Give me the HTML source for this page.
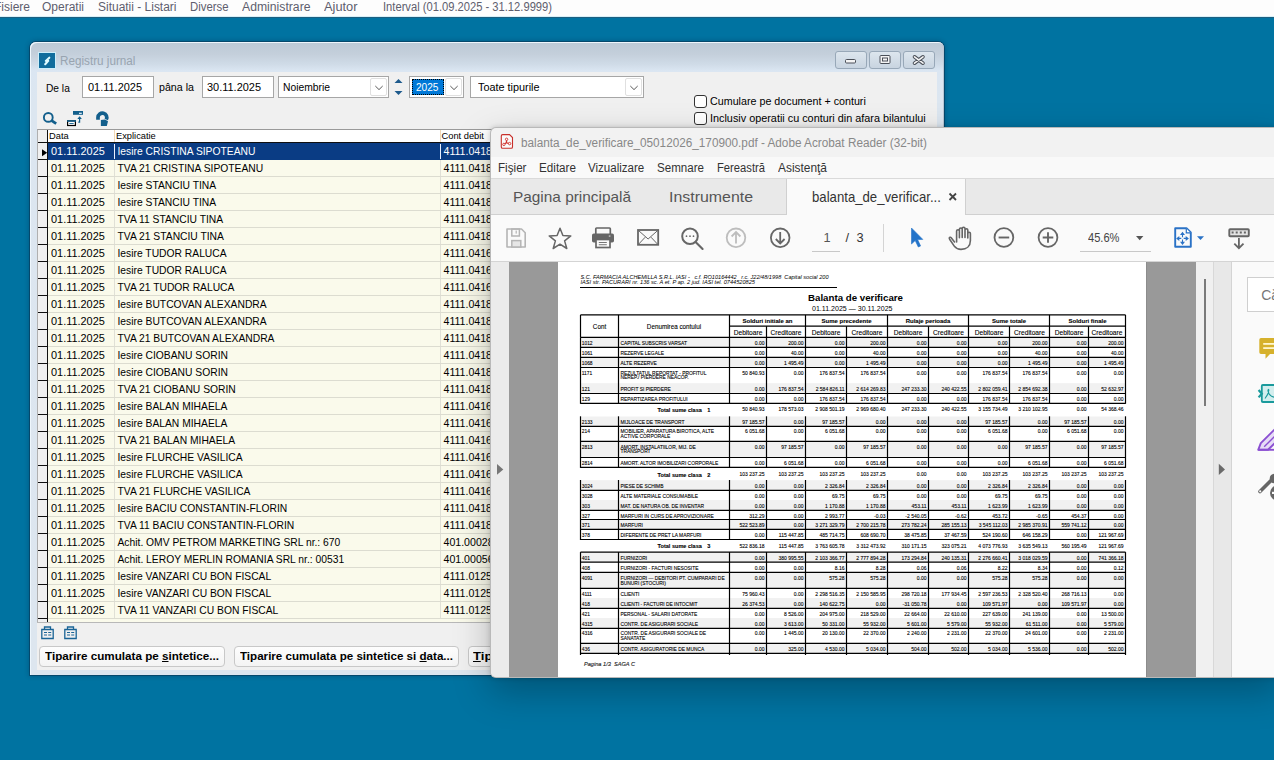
<!DOCTYPE html><html><head><meta charset="utf-8"><style>
html,body{margin:0;padding:0}
body{width:1274px;height:760px;overflow:hidden;position:relative;background:#0073a1;font-family:"Liberation Sans",sans-serif}
.a{position:absolute}
.t{white-space:nowrap}
</style></head><body><div class="a" style="left:0px;top:0px;width:1274px;height:17px;background:#fdfdfd;border-bottom:1px solid #d8f0f8;box-sizing:border-box"></div><div class="a" style="left:0px;top:17px;width:1274px;height:1px;background:#1c5f80"></div><div class="a t" style="left:-6.5px;top:-0.06px;font-size:12px;line-height:15px;color:#5e5e6e;font-weight:normal;transform:scaleX(0.9998);transform-origin:0 0;">Fisiere</div><div class="a t" style="left:42px;top:-0.06px;font-size:12px;line-height:15px;color:#5e5e6e;font-weight:normal;transform:scaleX(0.9996);transform-origin:0 0;">Operatii</div><div class="a t" style="left:97.5px;top:-0.06px;font-size:12px;line-height:15px;color:#5e5e6e;font-weight:normal;transform:scaleX(0.9975);transform-origin:0 0;">Situatii - Listari</div><div class="a t" style="left:189.8px;top:-0.06px;font-size:12px;line-height:15px;color:#5e5e6e;font-weight:normal;transform:scaleX(0.9465);transform-origin:0 0;">Diverse</div><div class="a t" style="left:241.8px;top:-0.06px;font-size:12px;line-height:15px;color:#5e5e6e;font-weight:normal;transform:scaleX(1.0170);transform-origin:0 0;">Administrare</div><div class="a t" style="left:324px;top:-0.06px;font-size:12px;line-height:15px;color:#5e5e6e;font-weight:normal;transform:scaleX(1.0686);transform-origin:0 0;">Ajutor</div><div class="a t" style="left:382.8px;top:-0.06px;font-size:12px;line-height:15px;color:#5e5e6e;font-weight:normal;transform:scaleX(0.9313);transform-origin:0 0;">Interval (01.09.2025 - 31.12.9999)</div><div class="a" style="left:30px;top:42px;width:914px;height:633px;background:linear-gradient(#bccad7 0,#c4cfdb 12px,#cfdbe7 22px,#dbe6f2 29px,#dce6f0 60px,#dde6ef);border-radius:6px 6px 0 0;box-shadow:inset 1px 1px 0 0 #eef6fc,inset -1px 0 0 0 #b8c6d4,0 0 0 1px rgba(10,50,80,0.55),0 0 5px 1px rgba(0,30,60,0.3)"></div><div class="a" style="left:38px;top:52px;width:18px;height:17px;background:#cdeefa"></div><div class="a" style="left:39px;top:53px;width:16px;height:15px;background:#116d9d"></div><svg class="a" style="left:0;top:0" width="60" height="70"><path d="M49.3 57.7 L45.8 60.9 L48.2 60.9 L45.2 64.2" stroke="#e0fbff" stroke-width="2.1" fill="none" stroke-linecap="round" stroke-linejoin="round"/></svg><div class="a t" style="left:59.5px;top:54.04px;font-size:12.3px;line-height:15px;color:#98a4b0;font-weight:normal;transform:scaleX(0.9520);transform-origin:0 0;">Registru jurnal</div><div class="a" style="left:835px;top:51px;width:32px;height:18px;box-sizing:border-box;border:1px solid #98a8b8;border-radius:3px;background:linear-gradient(#dde6ee,#c8d4e0)"></div><div class="a" style="left:869px;top:51px;width:32px;height:18px;box-sizing:border-box;border:1px solid #98a8b8;border-radius:3px;background:linear-gradient(#dde6ee,#c8d4e0)"></div><div class="a" style="left:903px;top:51px;width:32px;height:18px;box-sizing:border-box;border:1px solid #98a8b8;border-radius:3px;background:linear-gradient(#dde6ee,#c8d4e0)"></div><svg class="a" style="left:835px;top:51px" width="100" height="17"><rect x="10.5" y="8.5" width="10" height="3.5" rx="1" fill="#f4f4f4" stroke="#4a4f58" stroke-width="1"/><rect x="45" y="4.5" width="10" height="8" rx="1" fill="#f4f4f4" stroke="#4a4f58" stroke-width="1"/><rect x="47.5" y="7" width="5" height="3" fill="#f4f4f4" stroke="#4a4f58" stroke-width="1"/><path d="M79.5 5.8 L88 12.2 M88 5.8 L79.5 12.2" stroke="#4a4f58" stroke-width="3.6" fill="none" stroke-linecap="round"/><path d="M79.5 5.8 L88 12.2 M88 5.8 L79.5 12.2" stroke="#f4f4f4" stroke-width="1.6" fill="none" stroke-linecap="round"/></svg><div class="a" style="left:37px;top:72px;width:900px;height:598px;background:#f0f0f0"></div><div class="a t" style="left:46.2px;top:81.19px;font-size:11px;line-height:14px;color:#000;font-weight:normal;transform:scaleX(0.9268);transform-origin:0 0;">De la</div><div class="a" style="left:82px;top:76px;width:72px;height:22px;box-sizing:border-box;border:1px solid #a6a6a6;background:#fff"></div><div class="a t" style="left:87.5px;top:80.19px;font-size:11px;line-height:14px;color:#000;font-weight:normal;transform:scaleX(0.9956);transform-origin:0 0;">01.11.2025</div><div class="a t" style="left:159.3px;top:80.19px;font-size:11px;line-height:14px;color:#000;font-weight:normal;transform:scaleX(0.9698);transform-origin:0 0;">p&acirc;na la</div><div class="a" style="left:202px;top:76px;width:72px;height:22px;box-sizing:border-box;border:1px solid #a6a6a6;background:#fff"></div><div class="a t" style="left:207.3px;top:80.19px;font-size:11px;line-height:14px;color:#000;font-weight:normal;transform:scaleX(0.9956);transform-origin:0 0;">30.11.2025</div><div class="a" style="left:278px;top:76px;width:111px;height:22px;box-sizing:border-box;border:1px solid #a6a6a6;background:#fff"></div><div class="a t" style="left:283.3px;top:80.19px;font-size:11px;line-height:14px;color:#000;font-weight:normal;transform:scaleX(0.9375);transform-origin:0 0;">Noiembrie</div><div class="a" style="left:370px;top:78px;width:17px;height:18px;box-sizing:border-box;border:1px solid #e0e0e0;border-radius:2px;background:#fff"></div><svg class="a" style="left:372.5px;top:84px" width="12" height="8"><path d="M2.3 2 L6 5.6 L9.7 2" stroke="#5a5a5a" stroke-width="1" fill="none"/></svg><svg class="a" style="left:393px;top:78px" width="11" height="18"><path d="M1.5 5 L5.5 1 L9.5 5 Z" fill="#1d5a8c"/><path d="M1.5 13 L5.5 17 L9.5 13 Z" fill="#1d5a8c"/></svg><div class="a" style="left:409px;top:76px;width:55px;height:22px;box-sizing:border-box;border:1px solid #a6a6a6;background:#fff"></div><div class="a" style="left:412px;top:79px;width:32px;height:16px;box-sizing:border-box;background:#0078d7;outline:1px dotted #000;outline-offset:-1px"></div><div class="a t" style="left:415.5px;top:80.19px;font-size:11px;line-height:14px;color:#fff;font-weight:normal;transform:scaleX(0.9194);transform-origin:0 0;">2025</div><div class="a" style="left:445px;top:78px;width:17px;height:18px;box-sizing:border-box;border:1px solid #e0e0e0;border-radius:2px;background:#fff"></div><svg class="a" style="left:447.5px;top:84px" width="12" height="8"><path d="M2.3 2 L6 5.6 L9.7 2" stroke="#5a5a5a" stroke-width="1" fill="none"/></svg><div class="a" style="left:470px;top:76px;width:174px;height:22px;box-sizing:border-box;border:1px solid #a6a6a6;background:#fff"></div><div class="a t" style="left:477.8px;top:80.19px;font-size:11px;line-height:14px;color:#000;font-weight:normal;transform:scaleX(0.9860);transform-origin:0 0;">Toate tipurile</div><div class="a" style="left:625px;top:78px;width:17px;height:18px;box-sizing:border-box;border:1px solid #e0e0e0;border-radius:2px;background:#fff"></div><svg class="a" style="left:627.5px;top:84px" width="12" height="8"><path d="M2.3 2 L6 5.6 L9.7 2" stroke="#5a5a5a" stroke-width="1" fill="none"/></svg><div class="a" style="left:694px;top:95px;width:13px;height:13px;box-sizing:border-box;border:1px solid #333;border-radius:3px;background:#fff"></div><div class="a t" style="left:710.3px;top:94.79px;font-size:10.7px;line-height:13px;color:#000;font-weight:normal;transform:scaleX(1.0030);transform-origin:0 0;">Cumulare pe document + conturi</div><div class="a" style="left:694px;top:112px;width:13px;height:13px;box-sizing:border-box;border:1px solid #333;border-radius:3px;background:#fff"></div><div class="a t" style="left:710.3px;top:111.79px;font-size:10.7px;line-height:13px;color:#000;font-weight:normal;transform:scaleX(1.0144);transform-origin:0 0;">Inclusiv operatii cu conturi din afara bilantului</div><svg class="a" style="left:0;top:0" width="130" height="130"><circle cx="48.3" cy="117.4" r="4.4" stroke="#135f8c" stroke-width="1.9" fill="none"/><path d="M51.6 120.6 L56.2 123.6" stroke="#135f8c" stroke-width="2.8" stroke-linecap="butt"/><rect x="73" y="111" width="10" height="3.8" fill="#135f8c"/><rect x="79" y="112.7" width="2.8" height="1.2" fill="#e8f4fc"/><rect x="67.6" y="120.8" width="7.8" height="4.7" fill="#fff" stroke="#000" stroke-width="1.2"/><rect x="67" y="120.2" width="9" height="1.6" fill="#135f8c"/><rect x="69.3" y="123" width="4.4" height="0.9" fill="#135f8c"/><path d="M79.6 117.5 V122.2 H78.3" stroke="#135f8c" stroke-width="1.2" fill="none"/><path d="M77.3 119 L79.6 116.3 L81.9 119 Z" fill="#135f8c"/><path d="M98 119.7 V117.3 A4.4 4.4 0 1 1 106.3 119.5" stroke="#135f8c" stroke-width="3.7" fill="none"/><path d="M100.9 119.9 L100.9 126 L106.8 126 L108 121.3 L105 119.6 Z" fill="#135f8c"/></svg><div class="a" style="left:37px;top:129px;width:900px;height:494px;background:#fafaeb;box-sizing:border-box;border-top:1px solid #9a9a9a;border-left:1px solid #b0b0b0"></div><div class="a" style="left:38px;top:130px;width:899px;height:12px;background:#fff"></div><div class="a" style="left:38px;top:130px;width:9px;height:492px;background:#f0f0f0"></div><div class="a" style="left:47px;top:130px;width:1px;height:492px;background:#101010"></div><div class="a" style="left:38px;top:142px;width:899px;height:1px;background:#101010"></div><div class="a t" style="left:49px;top:129.78px;font-size:9.3px;line-height:12px;color:#000;font-weight:normal;">Data</div><div class="a t" style="left:116px;top:129.78px;font-size:9.3px;line-height:12px;color:#000;font-weight:normal;">Explicatie</div><div class="a t" style="left:441.5px;top:129.78px;font-size:9.3px;line-height:12px;color:#000;font-weight:normal;">Cont debit</div><div class="a" style="left:114px;top:130px;width:1px;height:12px;background:#f0d8b8"></div><div class="a" style="left:440px;top:130px;width:1px;height:12px;background:#f0d8b8"></div><div class="a" style="left:48px;top:159px;width:889px;height:1px;background:#dcdcd0"></div><div class="a" style="left:38px;top:159px;width:9px;height:1px;background:#101010"></div><div class="a" style="left:48px;top:143px;width:889px;height:17px;background:#0a3c84"></div><div class="a" style="left:114px;top:144px;width:1px;height:15px;background:#e8f0ff"></div><div class="a" style="left:440px;top:144px;width:1px;height:15px;background:#e8f0ff"></div><div class="a t" style="left:50.5px;top:144.83px;font-size:10.6px;line-height:13px;color:#fff;font-weight:normal;transform:scaleX(1.0293);transform-origin:0 0;">01.11.2025</div><div class="a t" style="left:117.5px;top:144.93px;font-size:10.3px;line-height:13px;color:#fff;font-weight:normal;">Iesire CRISTINA SIPOTEANU</div><div class="a t" style="left:443.5px;top:144.83px;font-size:10.6px;line-height:13px;color:#fff;font-weight:normal;">4111.0418</div><div class="a" style="left:48px;top:176px;width:889px;height:1px;background:#dcdcd0"></div><div class="a" style="left:38px;top:176px;width:9px;height:1px;background:#101010"></div><div class="a" style="left:114px;top:160px;width:1px;height:16px;background:#e0e0d6"></div><div class="a" style="left:440px;top:160px;width:1px;height:16px;background:#e0e0d6"></div><div class="a t" style="left:50.5px;top:161.83px;font-size:10.6px;line-height:13px;color:#000;font-weight:normal;transform:scaleX(1.0293);transform-origin:0 0;">01.11.2025</div><div class="a t" style="left:117.5px;top:161.93px;font-size:10.3px;line-height:13px;color:#000;font-weight:normal;">TVA 21 CRISTINA SIPOTEANU</div><div class="a t" style="left:443.5px;top:161.83px;font-size:10.6px;line-height:13px;color:#000;font-weight:normal;">4111.0418</div><div class="a" style="left:48px;top:193px;width:889px;height:1px;background:#dcdcd0"></div><div class="a" style="left:38px;top:193px;width:9px;height:1px;background:#101010"></div><div class="a" style="left:114px;top:177px;width:1px;height:16px;background:#e0e0d6"></div><div class="a" style="left:440px;top:177px;width:1px;height:16px;background:#e0e0d6"></div><div class="a t" style="left:50.5px;top:178.83px;font-size:10.6px;line-height:13px;color:#000;font-weight:normal;transform:scaleX(1.0293);transform-origin:0 0;">01.11.2025</div><div class="a t" style="left:117.5px;top:178.93px;font-size:10.3px;line-height:13px;color:#000;font-weight:normal;">Iesire STANCIU TINA</div><div class="a t" style="left:443.5px;top:178.83px;font-size:10.6px;line-height:13px;color:#000;font-weight:normal;">4111.0418</div><div class="a" style="left:48px;top:210px;width:889px;height:1px;background:#dcdcd0"></div><div class="a" style="left:38px;top:210px;width:9px;height:1px;background:#101010"></div><div class="a" style="left:114px;top:194px;width:1px;height:16px;background:#e0e0d6"></div><div class="a" style="left:440px;top:194px;width:1px;height:16px;background:#e0e0d6"></div><div class="a t" style="left:50.5px;top:195.83px;font-size:10.6px;line-height:13px;color:#000;font-weight:normal;transform:scaleX(1.0293);transform-origin:0 0;">01.11.2025</div><div class="a t" style="left:117.5px;top:195.93px;font-size:10.3px;line-height:13px;color:#000;font-weight:normal;">Iesire STANCIU TINA</div><div class="a t" style="left:443.5px;top:195.83px;font-size:10.6px;line-height:13px;color:#000;font-weight:normal;">4111.0418</div><div class="a" style="left:48px;top:227px;width:889px;height:1px;background:#dcdcd0"></div><div class="a" style="left:38px;top:227px;width:9px;height:1px;background:#101010"></div><div class="a" style="left:114px;top:211px;width:1px;height:16px;background:#e0e0d6"></div><div class="a" style="left:440px;top:211px;width:1px;height:16px;background:#e0e0d6"></div><div class="a t" style="left:50.5px;top:212.83px;font-size:10.6px;line-height:13px;color:#000;font-weight:normal;transform:scaleX(1.0293);transform-origin:0 0;">01.11.2025</div><div class="a t" style="left:117.5px;top:212.93px;font-size:10.3px;line-height:13px;color:#000;font-weight:normal;">TVA 11 STANCIU TINA</div><div class="a t" style="left:443.5px;top:212.83px;font-size:10.6px;line-height:13px;color:#000;font-weight:normal;">4111.0418</div><div class="a" style="left:48px;top:244px;width:889px;height:1px;background:#dcdcd0"></div><div class="a" style="left:38px;top:244px;width:9px;height:1px;background:#101010"></div><div class="a" style="left:114px;top:228px;width:1px;height:16px;background:#e0e0d6"></div><div class="a" style="left:440px;top:228px;width:1px;height:16px;background:#e0e0d6"></div><div class="a t" style="left:50.5px;top:229.83px;font-size:10.6px;line-height:13px;color:#000;font-weight:normal;transform:scaleX(1.0293);transform-origin:0 0;">01.11.2025</div><div class="a t" style="left:117.5px;top:229.93px;font-size:10.3px;line-height:13px;color:#000;font-weight:normal;">TVA 21 STANCIU TINA</div><div class="a t" style="left:443.5px;top:229.83px;font-size:10.6px;line-height:13px;color:#000;font-weight:normal;">4111.0418</div><div class="a" style="left:48px;top:261px;width:889px;height:1px;background:#dcdcd0"></div><div class="a" style="left:38px;top:261px;width:9px;height:1px;background:#101010"></div><div class="a" style="left:114px;top:245px;width:1px;height:16px;background:#e0e0d6"></div><div class="a" style="left:440px;top:245px;width:1px;height:16px;background:#e0e0d6"></div><div class="a t" style="left:50.5px;top:246.83px;font-size:10.6px;line-height:13px;color:#000;font-weight:normal;transform:scaleX(1.0293);transform-origin:0 0;">01.11.2025</div><div class="a t" style="left:117.5px;top:246.93px;font-size:10.3px;line-height:13px;color:#000;font-weight:normal;">Iesire TUDOR RALUCA</div><div class="a t" style="left:443.5px;top:246.83px;font-size:10.6px;line-height:13px;color:#000;font-weight:normal;">4111.0416</div><div class="a" style="left:48px;top:278px;width:889px;height:1px;background:#dcdcd0"></div><div class="a" style="left:38px;top:278px;width:9px;height:1px;background:#101010"></div><div class="a" style="left:114px;top:262px;width:1px;height:16px;background:#e0e0d6"></div><div class="a" style="left:440px;top:262px;width:1px;height:16px;background:#e0e0d6"></div><div class="a t" style="left:50.5px;top:263.83px;font-size:10.6px;line-height:13px;color:#000;font-weight:normal;transform:scaleX(1.0293);transform-origin:0 0;">01.11.2025</div><div class="a t" style="left:117.5px;top:263.93px;font-size:10.3px;line-height:13px;color:#000;font-weight:normal;">Iesire TUDOR RALUCA</div><div class="a t" style="left:443.5px;top:263.83px;font-size:10.6px;line-height:13px;color:#000;font-weight:normal;">4111.0416</div><div class="a" style="left:48px;top:295px;width:889px;height:1px;background:#dcdcd0"></div><div class="a" style="left:38px;top:295px;width:9px;height:1px;background:#101010"></div><div class="a" style="left:114px;top:279px;width:1px;height:16px;background:#e0e0d6"></div><div class="a" style="left:440px;top:279px;width:1px;height:16px;background:#e0e0d6"></div><div class="a t" style="left:50.5px;top:280.83px;font-size:10.6px;line-height:13px;color:#000;font-weight:normal;transform:scaleX(1.0293);transform-origin:0 0;">01.11.2025</div><div class="a t" style="left:117.5px;top:280.93px;font-size:10.3px;line-height:13px;color:#000;font-weight:normal;">TVA 21 TUDOR RALUCA</div><div class="a t" style="left:443.5px;top:280.83px;font-size:10.6px;line-height:13px;color:#000;font-weight:normal;">4111.0416</div><div class="a" style="left:48px;top:312px;width:889px;height:1px;background:#dcdcd0"></div><div class="a" style="left:38px;top:312px;width:9px;height:1px;background:#101010"></div><div class="a" style="left:114px;top:296px;width:1px;height:16px;background:#e0e0d6"></div><div class="a" style="left:440px;top:296px;width:1px;height:16px;background:#e0e0d6"></div><div class="a t" style="left:50.5px;top:297.83px;font-size:10.6px;line-height:13px;color:#000;font-weight:normal;transform:scaleX(1.0293);transform-origin:0 0;">01.11.2025</div><div class="a t" style="left:117.5px;top:297.93px;font-size:10.3px;line-height:13px;color:#000;font-weight:normal;">Iesire BUTCOVAN ALEXANDRA</div><div class="a t" style="left:443.5px;top:297.83px;font-size:10.6px;line-height:13px;color:#000;font-weight:normal;">4111.0418</div><div class="a" style="left:48px;top:329px;width:889px;height:1px;background:#dcdcd0"></div><div class="a" style="left:38px;top:329px;width:9px;height:1px;background:#101010"></div><div class="a" style="left:114px;top:313px;width:1px;height:16px;background:#e0e0d6"></div><div class="a" style="left:440px;top:313px;width:1px;height:16px;background:#e0e0d6"></div><div class="a t" style="left:50.5px;top:314.83px;font-size:10.6px;line-height:13px;color:#000;font-weight:normal;transform:scaleX(1.0293);transform-origin:0 0;">01.11.2025</div><div class="a t" style="left:117.5px;top:314.93px;font-size:10.3px;line-height:13px;color:#000;font-weight:normal;">Iesire BUTCOVAN ALEXANDRA</div><div class="a t" style="left:443.5px;top:314.83px;font-size:10.6px;line-height:13px;color:#000;font-weight:normal;">4111.0418</div><div class="a" style="left:48px;top:346px;width:889px;height:1px;background:#dcdcd0"></div><div class="a" style="left:38px;top:346px;width:9px;height:1px;background:#101010"></div><div class="a" style="left:114px;top:330px;width:1px;height:16px;background:#e0e0d6"></div><div class="a" style="left:440px;top:330px;width:1px;height:16px;background:#e0e0d6"></div><div class="a t" style="left:50.5px;top:331.83px;font-size:10.6px;line-height:13px;color:#000;font-weight:normal;transform:scaleX(1.0293);transform-origin:0 0;">01.11.2025</div><div class="a t" style="left:117.5px;top:331.93px;font-size:10.3px;line-height:13px;color:#000;font-weight:normal;">TVA 21 BUTCOVAN ALEXANDRA</div><div class="a t" style="left:443.5px;top:331.83px;font-size:10.6px;line-height:13px;color:#000;font-weight:normal;">4111.0418</div><div class="a" style="left:48px;top:363px;width:889px;height:1px;background:#dcdcd0"></div><div class="a" style="left:38px;top:363px;width:9px;height:1px;background:#101010"></div><div class="a" style="left:114px;top:347px;width:1px;height:16px;background:#e0e0d6"></div><div class="a" style="left:440px;top:347px;width:1px;height:16px;background:#e0e0d6"></div><div class="a t" style="left:50.5px;top:348.83px;font-size:10.6px;line-height:13px;color:#000;font-weight:normal;transform:scaleX(1.0293);transform-origin:0 0;">01.11.2025</div><div class="a t" style="left:117.5px;top:348.93px;font-size:10.3px;line-height:13px;color:#000;font-weight:normal;">Iesire CIOBANU SORIN</div><div class="a t" style="left:443.5px;top:348.83px;font-size:10.6px;line-height:13px;color:#000;font-weight:normal;">4111.0418</div><div class="a" style="left:48px;top:380px;width:889px;height:1px;background:#dcdcd0"></div><div class="a" style="left:38px;top:380px;width:9px;height:1px;background:#101010"></div><div class="a" style="left:114px;top:364px;width:1px;height:16px;background:#e0e0d6"></div><div class="a" style="left:440px;top:364px;width:1px;height:16px;background:#e0e0d6"></div><div class="a t" style="left:50.5px;top:365.83px;font-size:10.6px;line-height:13px;color:#000;font-weight:normal;transform:scaleX(1.0293);transform-origin:0 0;">01.11.2025</div><div class="a t" style="left:117.5px;top:365.93px;font-size:10.3px;line-height:13px;color:#000;font-weight:normal;">Iesire CIOBANU SORIN</div><div class="a t" style="left:443.5px;top:365.83px;font-size:10.6px;line-height:13px;color:#000;font-weight:normal;">4111.0418</div><div class="a" style="left:48px;top:397px;width:889px;height:1px;background:#dcdcd0"></div><div class="a" style="left:38px;top:397px;width:9px;height:1px;background:#101010"></div><div class="a" style="left:114px;top:381px;width:1px;height:16px;background:#e0e0d6"></div><div class="a" style="left:440px;top:381px;width:1px;height:16px;background:#e0e0d6"></div><div class="a t" style="left:50.5px;top:382.83px;font-size:10.6px;line-height:13px;color:#000;font-weight:normal;transform:scaleX(1.0293);transform-origin:0 0;">01.11.2025</div><div class="a t" style="left:117.5px;top:382.93px;font-size:10.3px;line-height:13px;color:#000;font-weight:normal;">TVA 21 CIOBANU SORIN</div><div class="a t" style="left:443.5px;top:382.83px;font-size:10.6px;line-height:13px;color:#000;font-weight:normal;">4111.0418</div><div class="a" style="left:48px;top:414px;width:889px;height:1px;background:#dcdcd0"></div><div class="a" style="left:38px;top:414px;width:9px;height:1px;background:#101010"></div><div class="a" style="left:114px;top:398px;width:1px;height:16px;background:#e0e0d6"></div><div class="a" style="left:440px;top:398px;width:1px;height:16px;background:#e0e0d6"></div><div class="a t" style="left:50.5px;top:399.83px;font-size:10.6px;line-height:13px;color:#000;font-weight:normal;transform:scaleX(1.0293);transform-origin:0 0;">01.11.2025</div><div class="a t" style="left:117.5px;top:399.93px;font-size:10.3px;line-height:13px;color:#000;font-weight:normal;">Iesire BALAN MIHAELA</div><div class="a t" style="left:443.5px;top:399.83px;font-size:10.6px;line-height:13px;color:#000;font-weight:normal;">4111.0416</div><div class="a" style="left:48px;top:431px;width:889px;height:1px;background:#dcdcd0"></div><div class="a" style="left:38px;top:431px;width:9px;height:1px;background:#101010"></div><div class="a" style="left:114px;top:415px;width:1px;height:16px;background:#e0e0d6"></div><div class="a" style="left:440px;top:415px;width:1px;height:16px;background:#e0e0d6"></div><div class="a t" style="left:50.5px;top:416.83px;font-size:10.6px;line-height:13px;color:#000;font-weight:normal;transform:scaleX(1.0293);transform-origin:0 0;">01.11.2025</div><div class="a t" style="left:117.5px;top:416.93px;font-size:10.3px;line-height:13px;color:#000;font-weight:normal;">Iesire BALAN MIHAELA</div><div class="a t" style="left:443.5px;top:416.83px;font-size:10.6px;line-height:13px;color:#000;font-weight:normal;">4111.0416</div><div class="a" style="left:48px;top:448px;width:889px;height:1px;background:#dcdcd0"></div><div class="a" style="left:38px;top:448px;width:9px;height:1px;background:#101010"></div><div class="a" style="left:114px;top:432px;width:1px;height:16px;background:#e0e0d6"></div><div class="a" style="left:440px;top:432px;width:1px;height:16px;background:#e0e0d6"></div><div class="a t" style="left:50.5px;top:433.83px;font-size:10.6px;line-height:13px;color:#000;font-weight:normal;transform:scaleX(1.0293);transform-origin:0 0;">01.11.2025</div><div class="a t" style="left:117.5px;top:433.93px;font-size:10.3px;line-height:13px;color:#000;font-weight:normal;">TVA 21 BALAN MIHAELA</div><div class="a t" style="left:443.5px;top:433.83px;font-size:10.6px;line-height:13px;color:#000;font-weight:normal;">4111.0416</div><div class="a" style="left:48px;top:465px;width:889px;height:1px;background:#dcdcd0"></div><div class="a" style="left:38px;top:465px;width:9px;height:1px;background:#101010"></div><div class="a" style="left:114px;top:449px;width:1px;height:16px;background:#e0e0d6"></div><div class="a" style="left:440px;top:449px;width:1px;height:16px;background:#e0e0d6"></div><div class="a t" style="left:50.5px;top:450.83px;font-size:10.6px;line-height:13px;color:#000;font-weight:normal;transform:scaleX(1.0293);transform-origin:0 0;">01.11.2025</div><div class="a t" style="left:117.5px;top:450.93px;font-size:10.3px;line-height:13px;color:#000;font-weight:normal;">Iesire FLURCHE VASILICA</div><div class="a t" style="left:443.5px;top:450.83px;font-size:10.6px;line-height:13px;color:#000;font-weight:normal;">4111.0416</div><div class="a" style="left:48px;top:482px;width:889px;height:1px;background:#dcdcd0"></div><div class="a" style="left:38px;top:482px;width:9px;height:1px;background:#101010"></div><div class="a" style="left:114px;top:466px;width:1px;height:16px;background:#e0e0d6"></div><div class="a" style="left:440px;top:466px;width:1px;height:16px;background:#e0e0d6"></div><div class="a t" style="left:50.5px;top:467.83px;font-size:10.6px;line-height:13px;color:#000;font-weight:normal;transform:scaleX(1.0293);transform-origin:0 0;">01.11.2025</div><div class="a t" style="left:117.5px;top:467.93px;font-size:10.3px;line-height:13px;color:#000;font-weight:normal;">Iesire FLURCHE VASILICA</div><div class="a t" style="left:443.5px;top:467.83px;font-size:10.6px;line-height:13px;color:#000;font-weight:normal;">4111.0416</div><div class="a" style="left:48px;top:499px;width:889px;height:1px;background:#dcdcd0"></div><div class="a" style="left:38px;top:499px;width:9px;height:1px;background:#101010"></div><div class="a" style="left:114px;top:483px;width:1px;height:16px;background:#e0e0d6"></div><div class="a" style="left:440px;top:483px;width:1px;height:16px;background:#e0e0d6"></div><div class="a t" style="left:50.5px;top:484.83px;font-size:10.6px;line-height:13px;color:#000;font-weight:normal;transform:scaleX(1.0293);transform-origin:0 0;">01.11.2025</div><div class="a t" style="left:117.5px;top:484.93px;font-size:10.3px;line-height:13px;color:#000;font-weight:normal;">TVA 21 FLURCHE VASILICA</div><div class="a t" style="left:443.5px;top:484.83px;font-size:10.6px;line-height:13px;color:#000;font-weight:normal;">4111.0416</div><div class="a" style="left:48px;top:516px;width:889px;height:1px;background:#dcdcd0"></div><div class="a" style="left:38px;top:516px;width:9px;height:1px;background:#101010"></div><div class="a" style="left:114px;top:500px;width:1px;height:16px;background:#e0e0d6"></div><div class="a" style="left:440px;top:500px;width:1px;height:16px;background:#e0e0d6"></div><div class="a t" style="left:50.5px;top:501.83px;font-size:10.6px;line-height:13px;color:#000;font-weight:normal;transform:scaleX(1.0293);transform-origin:0 0;">01.11.2025</div><div class="a t" style="left:117.5px;top:501.93px;font-size:10.3px;line-height:13px;color:#000;font-weight:normal;">Iesire BACIU CONSTANTIN-FLORIN</div><div class="a t" style="left:443.5px;top:501.83px;font-size:10.6px;line-height:13px;color:#000;font-weight:normal;">4111.0418</div><div class="a" style="left:48px;top:533px;width:889px;height:1px;background:#dcdcd0"></div><div class="a" style="left:38px;top:533px;width:9px;height:1px;background:#101010"></div><div class="a" style="left:114px;top:517px;width:1px;height:16px;background:#e0e0d6"></div><div class="a" style="left:440px;top:517px;width:1px;height:16px;background:#e0e0d6"></div><div class="a t" style="left:50.5px;top:518.83px;font-size:10.6px;line-height:13px;color:#000;font-weight:normal;transform:scaleX(1.0293);transform-origin:0 0;">01.11.2025</div><div class="a t" style="left:117.5px;top:518.93px;font-size:10.3px;line-height:13px;color:#000;font-weight:normal;">TVA 11 BACIU CONSTANTIN-FLORIN</div><div class="a t" style="left:443.5px;top:518.83px;font-size:10.6px;line-height:13px;color:#000;font-weight:normal;">4111.0418</div><div class="a" style="left:48px;top:550px;width:889px;height:1px;background:#dcdcd0"></div><div class="a" style="left:38px;top:550px;width:9px;height:1px;background:#101010"></div><div class="a" style="left:114px;top:534px;width:1px;height:16px;background:#e0e0d6"></div><div class="a" style="left:440px;top:534px;width:1px;height:16px;background:#e0e0d6"></div><div class="a t" style="left:50.5px;top:535.83px;font-size:10.6px;line-height:13px;color:#000;font-weight:normal;transform:scaleX(1.0293);transform-origin:0 0;">01.11.2025</div><div class="a t" style="left:117.5px;top:535.93px;font-size:10.3px;line-height:13px;color:#000;font-weight:normal;">Achit. OMV PETROM MARKETING SRL nr.: 670</div><div class="a t" style="left:443.5px;top:535.83px;font-size:10.6px;line-height:13px;color:#000;font-weight:normal;">401.00028</div><div class="a" style="left:48px;top:567px;width:889px;height:1px;background:#dcdcd0"></div><div class="a" style="left:38px;top:567px;width:9px;height:1px;background:#101010"></div><div class="a" style="left:114px;top:551px;width:1px;height:16px;background:#e0e0d6"></div><div class="a" style="left:440px;top:551px;width:1px;height:16px;background:#e0e0d6"></div><div class="a t" style="left:50.5px;top:552.83px;font-size:10.6px;line-height:13px;color:#000;font-weight:normal;transform:scaleX(1.0293);transform-origin:0 0;">01.11.2025</div><div class="a t" style="left:117.5px;top:552.93px;font-size:10.3px;line-height:13px;color:#000;font-weight:normal;">Achit. LEROY MERLIN ROMANIA SRL nr.: 00531</div><div class="a t" style="left:443.5px;top:552.83px;font-size:10.6px;line-height:13px;color:#000;font-weight:normal;">401.00056</div><div class="a" style="left:48px;top:584px;width:889px;height:1px;background:#dcdcd0"></div><div class="a" style="left:38px;top:584px;width:9px;height:1px;background:#101010"></div><div class="a" style="left:114px;top:568px;width:1px;height:16px;background:#e0e0d6"></div><div class="a" style="left:440px;top:568px;width:1px;height:16px;background:#e0e0d6"></div><div class="a t" style="left:50.5px;top:569.83px;font-size:10.6px;line-height:13px;color:#000;font-weight:normal;transform:scaleX(1.0293);transform-origin:0 0;">01.11.2025</div><div class="a t" style="left:117.5px;top:569.93px;font-size:10.3px;line-height:13px;color:#000;font-weight:normal;">Iesire VANZARI CU BON FISCAL</div><div class="a t" style="left:443.5px;top:569.83px;font-size:10.6px;line-height:13px;color:#000;font-weight:normal;">4111.0125</div><div class="a" style="left:48px;top:601px;width:889px;height:1px;background:#dcdcd0"></div><div class="a" style="left:38px;top:601px;width:9px;height:1px;background:#101010"></div><div class="a" style="left:114px;top:585px;width:1px;height:16px;background:#e0e0d6"></div><div class="a" style="left:440px;top:585px;width:1px;height:16px;background:#e0e0d6"></div><div class="a t" style="left:50.5px;top:586.83px;font-size:10.6px;line-height:13px;color:#000;font-weight:normal;transform:scaleX(1.0293);transform-origin:0 0;">01.11.2025</div><div class="a t" style="left:117.5px;top:586.93px;font-size:10.3px;line-height:13px;color:#000;font-weight:normal;">Iesire VANZARI CU BON FISCAL</div><div class="a t" style="left:443.5px;top:586.83px;font-size:10.6px;line-height:13px;color:#000;font-weight:normal;">4111.0125</div><div class="a" style="left:48px;top:618px;width:889px;height:1px;background:#dcdcd0"></div><div class="a" style="left:38px;top:618px;width:9px;height:1px;background:#101010"></div><div class="a" style="left:114px;top:602px;width:1px;height:16px;background:#e0e0d6"></div><div class="a" style="left:440px;top:602px;width:1px;height:16px;background:#e0e0d6"></div><div class="a t" style="left:50.5px;top:603.83px;font-size:10.6px;line-height:13px;color:#000;font-weight:normal;transform:scaleX(1.0293);transform-origin:0 0;">01.11.2025</div><div class="a t" style="left:117.5px;top:603.93px;font-size:10.3px;line-height:13px;color:#000;font-weight:normal;">TVA 11 VANZARI CU BON FISCAL</div><div class="a t" style="left:443.5px;top:603.83px;font-size:10.6px;line-height:13px;color:#000;font-weight:normal;">4111.0125</div><svg class="a" style="left:42px;top:148.5px" width="6" height="9"><path d="M0 0.3 L5.2 3.8 L0 7.3 Z" fill="#000"/></svg><div class="a" style="left:37px;top:622px;width:900px;height:1px;background:#b8b8b8"></div><svg class="a" style="left:41px;top:626px" width="14" height="14"><path d="M3.5 3.5 L3.5 1 L9.5 1 L9.5 3.5 M0.8 3.5 H12.2 V12.5 H0.8 Z" fill="none" stroke="#1a6496" stroke-width="1.3"/><path d="M3 6.5 H6 M7.2 6.5 H10.2 M3 9 H6 M7.2 9 H10.2" stroke="#1a6496" stroke-width="1.2"/></svg><svg class="a" style="left:64px;top:626px" width="14" height="14"><path d="M3.5 3.5 L3.5 1 L9.5 1 L9.5 3.5 M0.8 3.5 H12.2 V12.5 H0.8 Z" fill="none" stroke="#1a6496" stroke-width="1.3"/><path d="M3 6.5 H6 M7.2 6.5 H10.2 M3 9 H6 M7.2 9 H10.2" stroke="#1a6496" stroke-width="1.2"/></svg><div class="a" style="left:39px;top:646px;width:186px;height:21px;box-sizing:border-box;border:1px solid #c8c8c8;border-radius:4px;background:linear-gradient(#fdfdfd,#f4f4f4)"></div><div class="a t" style="left:45.3px;top:649.19px;font-size:11px;line-height:14px;color:#000;font-weight:bold;transform:scaleX(1.0594);transform-origin:0 0;">Tiparire cumulata pe <u>s</u>intetice...</div><div class="a" style="left:234px;top:646px;width:225px;height:21px;box-sizing:border-box;border:1px solid #c8c8c8;border-radius:4px;background:linear-gradient(#fdfdfd,#f4f4f4)"></div><div class="a t" style="left:240.3px;top:649.19px;font-size:11px;line-height:14px;color:#000;font-weight:bold;transform:scaleX(1.0537);transform-origin:0 0;">Tiparire cumulata pe sintetice si <u>d</u>ata...</div><div class="a" style="left:468px;top:646px;width:120px;height:21px;box-sizing:border-box;border:1px solid #c8c8c8;border-radius:4px;background:linear-gradient(#fdfdfd,#f4f4f4)"></div><div class="a t" style="left:473px;top:649.19px;font-size:11px;line-height:14px;color:#000;font-weight:bold;transform:scaleX(1.1930);transform-origin:0 0;"><u>T</u>iparire analitica...</div><div class="a" style="left:490px;top:127px;width:790px;height:551px;border-radius:6px 0 0 6px;background:#b9b9b9;box-shadow:0 0 5px 0 rgba(0,0,0,0.16),0 14px 36px 0 rgba(0,0,0,0.26)"></div><div class="a" style="left:491px;top:128px;width:783px;height:549px;background:#f2f2f2;border-radius:5px 0 0 5px;overflow:hidden"><div class="a" style="left:0px;top:29px;width:783px;height:21px;background:#f9f9f9"></div><div class="a" style="left:0px;top:50px;width:783px;height:1px;background:#dadada"></div><div class="a" style="left:0px;top:51px;width:783px;height:35px;background:#e9e9e9"></div><div class="a" style="left:295px;top:51px;width:180px;height:36px;background:#fafafa;box-sizing:border-box;border-left:1px solid #d0d0d0;border-right:1px solid #d0d0d0"></div><div class="a" style="left:0px;top:86px;width:295px;height:1px;background:#d0d0d0"></div><div class="a" style="left:475px;top:86px;width:308px;height:1px;background:#d0d0d0"></div><div class="a" style="left:0px;top:87px;width:783px;height:46px;background:#fafafa"></div><div class="a" style="left:0px;top:133px;width:783px;height:1px;background:#d4d4d4"></div><div class="a" style="left:0px;top:134px;width:18px;height:415px;background:#ebebeb"></div><div class="a" style="left:18px;top:134px;width:687px;height:415px;background:#999"></div><div class="a" style="left:67px;top:134px;width:588px;height:415px;background:#fff"></div><div class="a" style="left:655px;top:134px;width:1px;height:415px;background:#8c8c8c"></div><div class="a" style="left:705px;top:134px;width:17px;height:415px;background:#f0f0f0"></div><div class="a" style="left:722px;top:134px;width:1px;height:415px;background:#d8d8d8"></div><div class="a" style="left:723px;top:134px;width:17px;height:415px;background:#e8e8e8"></div><div class="a" style="left:740px;top:134px;width:1px;height:415px;background:#d4d4d4"></div><div class="a" style="left:741px;top:134px;width:42px;height:415px;background:#fafafa"></div><div class="a" style="left:713px;top:151px;width:2px;height:127px;background:#7a7a7a"></div></div><svg class="a" style="left:0;top:0" width="530" height="160"><path d="M502.6 134.6 H509.5 L512.5 137.6 V147 Q512.5 148.3 511.2 148.3 H502.6 Q501.3 148.3 501.3 147 V135.9 Q501.3 134.6 502.6 134.6 Z" fill="#fafafa" stroke="#c8302a" stroke-width="1.1"/><circle cx="506.6" cy="139.3" r="1.2" fill="none" stroke="#d0302a" stroke-width="0.9"/><circle cx="503.9" cy="144.4" r="1.2" fill="none" stroke="#d0302a" stroke-width="0.9"/><circle cx="509.6" cy="143.6" r="1.2" fill="none" stroke="#d0302a" stroke-width="0.9"/><path d="M506.6 140.5 L506.4 142.6 M504.9 143.7 L506.4 142.6 L508.5 143.3" fill="none" stroke="#d0302a" stroke-width="1.3"/></svg><div class="a t" style="left:520.8px;top:135.17px;font-size:12.5px;line-height:16px;color:#888;font-weight:normal;transform:scaleX(0.9407);transform-origin:0 0;">balanta_de_verificare_05012026_170900.pdf - Adobe Acrobat Reader (32-bit)</div><div class="a t" style="left:497.5px;top:161.04px;font-size:12px;line-height:15px;color:#333;font-weight:normal;transform:scaleX(0.9716);transform-origin:0 0;">Fi&#351;ier</div><div class="a t" style="left:538.8px;top:161.04px;font-size:12px;line-height:15px;color:#333;font-weight:normal;transform:scaleX(0.9731);transform-origin:0 0;">Editare</div><div class="a t" style="left:588.2px;top:161.04px;font-size:12px;line-height:15px;color:#333;font-weight:normal;transform:scaleX(0.9627);transform-origin:0 0;">Vizualizare</div><div class="a t" style="left:657.4px;top:161.04px;font-size:12px;line-height:15px;color:#333;font-weight:normal;transform:scaleX(0.9652);transform-origin:0 0;">Semnare</div><div class="a t" style="left:717.3px;top:161.04px;font-size:12px;line-height:15px;color:#333;font-weight:normal;transform:scaleX(0.9347);transform-origin:0 0;">Fereastr&#259;</div><div class="a t" style="left:778.3px;top:161.04px;font-size:12px;line-height:15px;color:#333;font-weight:normal;transform:scaleX(0.9927);transform-origin:0 0;">Asisten&#355;&#259;</div><div class="a t" style="left:513px;top:187.30px;font-size:15px;line-height:19px;color:#555;font-weight:normal;transform:scaleX(1.0253);transform-origin:0 0;">Pagina principal&#259;</div><div class="a t" style="left:669.3px;top:187.30px;font-size:15px;line-height:19px;color:#555;font-weight:normal;transform:scaleX(1.0605);transform-origin:0 0;">Instrumente</div><div class="a t" style="left:811.8px;top:188.08px;font-size:14.2px;line-height:18px;color:#333;font-weight:normal;transform:scaleX(0.9285);transform-origin:0 0;">balanta_de_verificar...</div><svg class="a" style="left:948px;top:192px" width="10" height="10"><path d="M1.5 1.5 L8 8 M8 1.5 L1.5 8" stroke="#444" stroke-width="1.8"/></svg><svg class="a" style="left:0;top:0" width="1274" height="760" viewBox="0 0 1274 760"><path d="M507 229 H521.5 L525.2 232.7 V247 H507 Z" fill="none" stroke="#b5b5b5" stroke-width="1.6" stroke-linejoin="round"/><rect x="511.8" y="229" width="7.6" height="7" fill="none" stroke="#b5b5b5" stroke-width="1.5"/><rect x="515.6" y="230.6" width="1.2" height="3" fill="#b5b5b5"/><rect x="511.8" y="240.6" width="9" height="6.4" fill="#e6e6e6" stroke="#b5b5b5" stroke-width="1.5"/><path d="M560 228.2 L562.9 235.6 L570.8 235.9 L564.6 240.9 L566.8 248.5 L560 244.2 L553.2 248.5 L555.4 240.9 L549.2 235.9 L557.1 235.6 Z" fill="none" stroke="#666" stroke-width="1.5" stroke-linejoin="round"/><rect x="595.8" y="228" width="14.5" height="7" rx="0.8" fill="none" stroke="#666" stroke-width="1.7"/><rect x="592" y="233.5" width="22" height="9" rx="1.8" fill="#666"/><rect x="596" y="239.5" width="14" height="8" fill="#fafafa" stroke="#666" stroke-width="1.7"/><rect x="598.8" y="242" width="8" height="0.9" fill="#666"/><rect x="598.8" y="244.3" width="8" height="0.9" fill="#666"/><rect x="608.8" y="235.6" width="1.6" height="0.9" fill="#fafafa"/><rect x="638" y="230" width="20.2" height="14.8" fill="none" stroke="#666" stroke-width="1.8"/><path d="M638.5 230.5 L648.1 239 L657.7 230.5 M638.5 244.3 L645.2 237.2 M657.7 244.3 L651 237.2" fill="none" stroke="#666" stroke-width="1"/><circle cx="690" cy="236.3" r="7.8" fill="none" stroke="#666" stroke-width="2"/><path d="M695.8 242.2 L702.6 249" stroke="#666" stroke-width="2.1" stroke-linecap="round"/><circle cx="686.5" cy="236.2" r="0.85" fill="#666"/><circle cx="690" cy="236.2" r="0.85" fill="#666"/><circle cx="693.5" cy="236.2" r="0.85" fill="#666"/><circle cx="736" cy="237.8" r="9.3" fill="none" stroke="#bdbdbd" stroke-width="1.8"/><path d="M736 243.5 V232.3 M731.6 236.5 L736 232 L740.4 236.5" fill="none" stroke="#bdbdbd" stroke-width="1.8"/><circle cx="780.2" cy="237.8" r="9.3" fill="none" stroke="#666" stroke-width="1.8"/><path d="M780.2 232 V243.3 M775.8 239 L780.2 243.5 L784.6 239" fill="none" stroke="#666" stroke-width="1.8"/><rect x="812" y="251" width="28" height="1" fill="#c8c8c8"/><rect x="883" y="224" width="1" height="28" fill="#d4d4d4"/><path d="M911.5 228 L911.5 244 L915.2 240.6 L918.3 247 L920.6 245.9 L917.6 239.6 L922.8 239.4 Z" fill="#2373c9" stroke="#2373c9" stroke-width="0.6" stroke-linejoin="round"/><path d="M954.5 242 L951.2 237.8 C950 236.4 948.6 237.6 949.6 239.2 L954.6 246.6 C956.2 248.6 958 249.4 961 249.4 C966.8 249.4 970.4 246 970.4 240.5 V233.5 C970.4 231.8 967.8 231.8 967.8 233.5 V238 M967.8 234 V230 C967.8 228.3 965 228.3 965 230 V237.5 M965 230 V228.5 C965 226.8 962.2 226.8 962.2 228.5 V237.5 M962.2 229.2 C962.2 227.6 959.4 227.6 959.4 229.2 V237.8 M959.4 231 C959.4 229.4 956.6 229.4 956.6 231 V242" fill="none" stroke="#666" stroke-width="1.6" stroke-linecap="round" stroke-linejoin="round"/><circle cx="1003.9" cy="237.5" r="9.4" fill="none" stroke="#666" stroke-width="1.8"/><path d="M998.6 237.5 H1009.2" stroke="#666" stroke-width="1.9"/><circle cx="1048" cy="237.5" r="9.4" fill="none" stroke="#666" stroke-width="1.8"/><path d="M1042.7 237.5 H1053.3 M1048 232.2 V242.8" stroke="#666" stroke-width="1.9"/><rect x="1080" y="251" width="71" height="1" fill="#c8c8c8"/><path d="M1136 236 L1143.4 236 L1139.7 240.3 Z" fill="#555"/><path d="M1175.2 228.2 H1186.5 L1190.8 232.5 V246.8 H1175.2 Z" fill="none" stroke="#2a72c6" stroke-width="1.9" stroke-linejoin="round"/><path d="M1186.3 228.5 V232.8 H1190.5" fill="#fff" stroke="#2a72c6" stroke-width="1.2"/><path d="M1182.5 234.5 V237.2 M1182.5 239.6 V242.3 M1178.6 238.4 H1181.3 M1183.7 238.4 H1186.4" stroke="#2a72c6" stroke-width="1.1"/><path d="M1182.5 231.8 L1180 235 H1185 Z M1182.5 245 L1180 241.8 H1185 Z M1176.1 238.4 L1179.3 235.9 V240.9 Z M1188.9 238.4 L1185.7 235.9 V240.9 Z" fill="#2a72c6"/><path d="M1197 236.2 L1204 236.2 L1200.5 240 Z" fill="#2a72c6"/><rect x="1229.3" y="229.2" width="19.5" height="7" rx="0.8" fill="#e4e4e4" stroke="#666" stroke-width="1.9"/><rect x="1231.6" y="231.5" width="2" height="2" fill="#666"/><rect x="1235.7" y="231.5" width="2" height="2" fill="#666"/><rect x="1239.8" y="231.5" width="2" height="2" fill="#666"/><rect x="1243.9" y="231.5" width="2" height="2" fill="#666"/><path d="M1238.9 238 V248 M1234.3 243.6 L1238.9 248.2 L1243.5 243.6" fill="none" stroke="#666" stroke-width="1.8"/><path d="M497 464 L503.3 469.4 L497 474.8 Z" fill="#777"/><path d="M1218.8 463.8 L1225 469.4 L1218.8 475 Z" fill="#6a6a6a"/><rect x="1247.5" y="277.5" width="40" height="34" fill="#fff" stroke="#cfcfcf" stroke-width="1"/><path d="M1261 338 H1276 V354 H1270 L1265.5 358.8 V354 H1261 Q1259.3 354 1259.3 352.3 V339.7 Q1259.3 338 1261 338 Z" fill="#d6b12c"/><rect x="1263.2" y="343" width="13" height="1.8" fill="#fff6cc"/><rect x="1263.2" y="347.2" width="13" height="1.8" fill="#fff6cc"/><rect x="1261.8" y="385" width="16" height="17" rx="1" fill="#d3eeee" stroke="#1a9a9c" stroke-width="1.8"/><path d="M1258.6 390 L1261.8 393.7 L1258.6 397.4" fill="none" stroke="#1a9a9c" stroke-width="2.2"/><path d="M1265 398.5 C1267 396 1268.5 393 1268.8 390.5 C1269 389 1267.8 389 1268 391 C1268.5 394 1271 397 1276 397.5" fill="none" stroke="#1a9a9c" stroke-width="1.1"/><path d="M1258.2 449.8 L1260.8 443.2 L1275 429 L1282 436 L1268 449.8 Z" fill="#e6dcf6" stroke="#8b4fd2" stroke-width="1.9" stroke-linejoin="round"/><path d="M1258.2 449.8 H1278" stroke="#8b4fd2" stroke-width="1.9"/><path d="M1264.2 446.8 L1278 433" stroke="#8b4fd2" stroke-width="1.4"/><path d="M1260 491.5 L1271 480.5" stroke="#666" stroke-width="3.6" stroke-linecap="round"/><circle cx="1274.5" cy="478.5" r="4.8" fill="#666"/><circle cx="1276.5" cy="476.5" r="2.4" fill="#fafafa"/><circle cx="1277.5" cy="493" r="7.5" fill="#666"/><circle cx="1260.2" cy="491.3" r="1.1" fill="#fafafa"/><rect x="1272" y="491.8" width="8" height="2.2" fill="#fafafa"/></svg><div class="a t" style="left:823.5px;top:229.86px;font-size:12.8px;line-height:16px;color:#555;font-weight:normal;">1</div><div class="a t" style="left:845.5px;top:229.86px;font-size:12.8px;line-height:16px;color:#333;font-weight:normal;">/</div><div class="a t" style="left:856.5px;top:229.86px;font-size:12.8px;line-height:16px;color:#333;font-weight:normal;">3</div><div class="a t" style="left:1087.5px;top:229.86px;font-size:12.8px;line-height:16px;color:#444;font-weight:normal;transform:scaleX(0.8679);transform-origin:0 0;">45.6%</div><div class="a t" style="left:1261.2px;top:285.95px;font-size:14px;line-height:18px;color:#777;font-weight:normal;">C&#259;utare</div>
<svg class="a" style="left:0;top:0" width="1274" height="760" viewBox="0 0 1274 760"><defs><clipPath id="pg"><rect x="558" y="262" width="588" height="415"/></clipPath></defs><g clip-path="url(#pg)" font-family="Liberation Sans, sans-serif"><text x="580.5" y="278.8" font-size="5.75" font-style="italic" fill="#000" textLength="248" lengthAdjust="spacingAndGlyphs">S.C. FARMACIA ALCHEMILLA S.R.L. IASI -&#160;&#160;&#160;c.f. RO10164442&#160;&#160; r.c. J22/48/1998&#160; Capital social 200</text><text x="580.5" y="283.8" font-size="5.75" font-style="italic" fill="#000" textLength="174.5" lengthAdjust="spacingAndGlyphs">IASI str. PACURARI nr. 136 sc. A et. P ap. 2 jud. IASI tel. 0744520825</text><rect x="580" y="287" width="257" height="1" fill="#000"/><text x="808" y="301" font-size="9.8" font-weight="bold" fill="#000" textLength="95" lengthAdjust="spacingAndGlyphs">Balanta de verificare</text><text x="812" y="310.6" font-size="7" fill="#000" textLength="80.5" lengthAdjust="spacingAndGlyphs">01.11.2025 — 30.11.2025</text><text x="584" y="666" font-size="5.7" font-style="italic" fill="#222" stroke="#222" stroke-width="0.12" textLength="51" lengthAdjust="spacingAndGlyphs">Pagina 1/3&#160; SAGA C</text><rect x="580.5" y="337.3" width="545.0" height="10.0" fill="#f1f1f1"/><rect x="580.5" y="357.3" width="545.0" height="10.199999999999989" fill="#f1f1f1"/><rect x="580.5" y="383.2" width="545.0" height="10.300000000000011" fill="#f1f1f1"/><rect x="580.5" y="416.5" width="545.0" height="9.800000000000011" fill="#f1f1f1"/><rect x="580.5" y="441.4" width="545.0" height="16.100000000000023" fill="#f1f1f1"/><rect x="580.5" y="480.2" width="545.0" height="10.100000000000023" fill="#f1f1f1"/><rect x="580.5" y="500.0" width="545.0" height="10.300000000000011" fill="#f1f1f1"/><rect x="580.5" y="519.5" width="545.0" height="9.799999999999955" fill="#f1f1f1"/><rect x="580.5" y="552.1" width="545.0" height="10.100000000000023" fill="#f1f1f1"/><rect x="580.5" y="572.4" width="545.0" height="16.0" fill="#f1f1f1"/><rect x="580.5" y="598.0" width="545.0" height="10.399999999999977" fill="#f1f1f1"/><rect x="580.5" y="618.0" width="545.0" height="10.299999999999955" fill="#f1f1f1"/><rect x="580.5" y="643.3" width="545.0" height="10.0" fill="#f1f1f1"/><g stroke="#000" stroke-width="1.2"><line x1="580.5" y1="314.9" x2="1125.5" y2="314.9"/><line x1="580.5" y1="337.3" x2="1125.5" y2="337.3"/><line x1="729.5" y1="326.2" x2="1125.5" y2="326.2"/><line x1="580.5" y1="314.9" x2="580.5" y2="337.3"/><line x1="618.5" y1="314.9" x2="618.5" y2="337.3"/><line x1="729.5" y1="314.9" x2="729.5" y2="337.3"/><line x1="766.5" y1="326.2" x2="766.5" y2="337.3"/><line x1="805.5" y1="314.9" x2="805.5" y2="337.3"/><line x1="846.5" y1="326.2" x2="846.5" y2="337.3"/><line x1="887.5" y1="314.9" x2="887.5" y2="337.3"/><line x1="928.5" y1="326.2" x2="928.5" y2="337.3"/><line x1="968.5" y1="314.9" x2="968.5" y2="337.3"/><line x1="1009.5" y1="326.2" x2="1009.5" y2="337.3"/><line x1="1049.5" y1="314.9" x2="1049.5" y2="337.3"/><line x1="1088.5" y1="326.2" x2="1088.5" y2="337.3"/><line x1="1125.5" y1="314.9" x2="1125.5" y2="337.3"/><line x1="580.5" y1="347.3" x2="1125.5" y2="347.3"/><line x1="580.5" y1="357.3" x2="1125.5" y2="357.3"/><line x1="580.5" y1="367.5" x2="1125.5" y2="367.5"/><line x1="580.5" y1="393.5" x2="1125.5" y2="393.5"/><line x1="580.5" y1="403.3" x2="1125.5" y2="403.3"/><line x1="580.5" y1="337.3" x2="580.5" y2="403.8"/><line x1="618.5" y1="337.3" x2="618.5" y2="403.8"/><line x1="729.5" y1="337.3" x2="729.5" y2="403.8"/><line x1="766.5" y1="337.3" x2="766.5" y2="403.8"/><line x1="805.5" y1="337.3" x2="805.5" y2="403.8"/><line x1="846.5" y1="337.3" x2="846.5" y2="403.8"/><line x1="887.5" y1="337.3" x2="887.5" y2="403.8"/><line x1="928.5" y1="337.3" x2="928.5" y2="403.8"/><line x1="968.5" y1="337.3" x2="968.5" y2="403.8"/><line x1="1009.5" y1="337.3" x2="1009.5" y2="403.8"/><line x1="1049.5" y1="337.3" x2="1049.5" y2="403.8"/><line x1="1088.5" y1="337.3" x2="1088.5" y2="403.8"/><line x1="1125.5" y1="337.3" x2="1125.5" y2="403.8"/><line x1="580.5" y1="426.3" x2="1125.5" y2="426.3"/><line x1="580.5" y1="441.4" x2="1125.5" y2="441.4"/><line x1="580.5" y1="457.5" x2="1125.5" y2="457.5"/><line x1="580.5" y1="467.4" x2="1125.5" y2="467.4"/><line x1="580.5" y1="416.3" x2="580.5" y2="467.9"/><line x1="618.5" y1="416.3" x2="618.5" y2="467.9"/><line x1="729.5" y1="416.3" x2="729.5" y2="467.9"/><line x1="766.5" y1="416.3" x2="766.5" y2="467.9"/><line x1="805.5" y1="416.3" x2="805.5" y2="467.9"/><line x1="846.5" y1="416.3" x2="846.5" y2="467.9"/><line x1="887.5" y1="416.3" x2="887.5" y2="467.9"/><line x1="928.5" y1="416.3" x2="928.5" y2="467.9"/><line x1="968.5" y1="416.3" x2="968.5" y2="467.9"/><line x1="1009.5" y1="416.3" x2="1009.5" y2="467.9"/><line x1="1049.5" y1="416.3" x2="1049.5" y2="467.9"/><line x1="1088.5" y1="416.3" x2="1088.5" y2="467.9"/><line x1="1125.5" y1="416.3" x2="1125.5" y2="467.9"/><line x1="580.5" y1="490.3" x2="1125.5" y2="490.3"/><line x1="580.5" y1="510.3" x2="1125.5" y2="510.3"/><line x1="580.5" y1="519.5" x2="1125.5" y2="519.5"/><line x1="580.5" y1="529.3" x2="1125.5" y2="529.3"/><line x1="580.5" y1="539.5" x2="1125.5" y2="539.5"/><line x1="580.5" y1="480.0" x2="580.5" y2="540.0"/><line x1="618.5" y1="480.0" x2="618.5" y2="540.0"/><line x1="729.5" y1="480.0" x2="729.5" y2="540.0"/><line x1="766.5" y1="480.0" x2="766.5" y2="540.0"/><line x1="805.5" y1="480.0" x2="805.5" y2="540.0"/><line x1="846.5" y1="480.0" x2="846.5" y2="540.0"/><line x1="887.5" y1="480.0" x2="887.5" y2="540.0"/><line x1="928.5" y1="480.0" x2="928.5" y2="540.0"/><line x1="968.5" y1="480.0" x2="968.5" y2="540.0"/><line x1="1009.5" y1="480.0" x2="1009.5" y2="540.0"/><line x1="1049.5" y1="480.0" x2="1049.5" y2="540.0"/><line x1="1088.5" y1="480.0" x2="1088.5" y2="540.0"/><line x1="1125.5" y1="480.0" x2="1125.5" y2="540.0"/><line x1="580.5" y1="552.1" x2="1125.5" y2="552.1"/><line x1="580.5" y1="562.2" x2="1125.5" y2="562.2"/><line x1="580.5" y1="572.4" x2="1125.5" y2="572.4"/><line x1="580.5" y1="588.4" x2="1125.5" y2="588.4"/><line x1="580.5" y1="608.4" x2="1125.5" y2="608.4"/><line x1="580.5" y1="628.3" x2="1125.5" y2="628.3"/><line x1="580.5" y1="643.3" x2="1125.5" y2="643.3"/><line x1="580.5" y1="653.3" x2="1125.5" y2="653.3"/><line x1="580.5" y1="552.1" x2="580.5" y2="655.0"/><line x1="618.5" y1="552.1" x2="618.5" y2="655.0"/><line x1="729.5" y1="552.1" x2="729.5" y2="655.0"/><line x1="766.5" y1="552.1" x2="766.5" y2="655.0"/><line x1="805.5" y1="552.1" x2="805.5" y2="655.0"/><line x1="846.5" y1="552.1" x2="846.5" y2="655.0"/><line x1="887.5" y1="552.1" x2="887.5" y2="655.0"/><line x1="928.5" y1="552.1" x2="928.5" y2="655.0"/><line x1="968.5" y1="552.1" x2="968.5" y2="655.0"/><line x1="1009.5" y1="552.1" x2="1009.5" y2="655.0"/><line x1="1049.5" y1="552.1" x2="1049.5" y2="655.0"/><line x1="1088.5" y1="552.1" x2="1088.5" y2="655.0"/><line x1="1125.5" y1="552.1" x2="1125.5" y2="655.0"/></g><g stroke="#000" stroke-width="0.1"><text x="599.50" y="328.6" font-size="6.3" text-anchor="middle" fill="#000">Cont</text><text x="674.00" y="328.6" font-size="6.3" text-anchor="middle" fill="#000">Denumirea contului</text><text x="767.50" y="322.9" font-size="6.0" text-anchor="middle" fill="#000" font-weight="bold">Solduri initiale an</text><text x="846.50" y="322.9" font-size="6.0" text-anchor="middle" fill="#000" font-weight="bold">Sume precedente</text><text x="928.00" y="322.9" font-size="6.0" text-anchor="middle" fill="#000" font-weight="bold">Rulaje perioada</text><text x="1009.00" y="322.9" font-size="6.0" text-anchor="middle" fill="#000" font-weight="bold">Sume totale</text><text x="1087.50" y="322.9" font-size="6.0" text-anchor="middle" fill="#000" font-weight="bold">Solduri finale</text><text x="748.00" y="334.7" font-size="6.6" text-anchor="middle" fill="#000">Debitoare</text><text x="786.00" y="334.7" font-size="6.6" text-anchor="middle" fill="#000">Creditoare</text><text x="826.00" y="334.7" font-size="6.6" text-anchor="middle" fill="#000">Debitoare</text><text x="867.00" y="334.7" font-size="6.6" text-anchor="middle" fill="#000">Creditoare</text><text x="908.00" y="334.7" font-size="6.6" text-anchor="middle" fill="#000">Debitoare</text><text x="948.50" y="334.7" font-size="6.6" text-anchor="middle" fill="#000">Creditoare</text><text x="989.00" y="334.7" font-size="6.6" text-anchor="middle" fill="#000">Debitoare</text><text x="1029.50" y="334.7" font-size="6.6" text-anchor="middle" fill="#000">Creditoare</text><text x="1069.00" y="334.7" font-size="6.6" text-anchor="middle" fill="#000">Debitoare</text><text x="1107.00" y="334.7" font-size="6.6" text-anchor="middle" fill="#000">Creditoare</text><text x="581.7" y="344.90" font-size="4.9" fill="#000">1012</text><text x="620.5" y="344.90" font-size="4.9" fill="#000">CAPITAL SUBSCRIS VARSAT</text><text x="764.5" y="344.90" font-size="5.0" text-anchor="end" fill="#000">0.00</text><text x="803.5" y="344.90" font-size="5.0" text-anchor="end" fill="#000">200.00</text><text x="844.5" y="344.90" font-size="5.0" text-anchor="end" fill="#000">0.00</text><text x="885.5" y="344.90" font-size="5.0" text-anchor="end" fill="#000">200.00</text><text x="926.5" y="344.90" font-size="5.0" text-anchor="end" fill="#000">0.00</text><text x="966.5" y="344.90" font-size="5.0" text-anchor="end" fill="#000">0.00</text><text x="1007.5" y="344.90" font-size="5.0" text-anchor="end" fill="#000">0.00</text><text x="1047.5" y="344.90" font-size="5.0" text-anchor="end" fill="#000">200.00</text><text x="1086.5" y="344.90" font-size="5.0" text-anchor="end" fill="#000">0.00</text><text x="1123.5" y="344.90" font-size="5.0" text-anchor="end" fill="#000">200.00</text><text x="581.7" y="354.90" font-size="4.9" fill="#000">1061</text><text x="620.5" y="354.90" font-size="4.9" fill="#000">REZERVE LEGALE</text><text x="764.5" y="354.90" font-size="5.0" text-anchor="end" fill="#000">0.00</text><text x="803.5" y="354.90" font-size="5.0" text-anchor="end" fill="#000">40.00</text><text x="844.5" y="354.90" font-size="5.0" text-anchor="end" fill="#000">0.00</text><text x="885.5" y="354.90" font-size="5.0" text-anchor="end" fill="#000">40.00</text><text x="926.5" y="354.90" font-size="5.0" text-anchor="end" fill="#000">0.00</text><text x="966.5" y="354.90" font-size="5.0" text-anchor="end" fill="#000">0.00</text><text x="1007.5" y="354.90" font-size="5.0" text-anchor="end" fill="#000">0.00</text><text x="1047.5" y="354.90" font-size="5.0" text-anchor="end" fill="#000">40.00</text><text x="1086.5" y="354.90" font-size="5.0" text-anchor="end" fill="#000">0.00</text><text x="1123.5" y="354.90" font-size="5.0" text-anchor="end" fill="#000">40.00</text><text x="581.7" y="365.00" font-size="4.9" fill="#000">1068</text><text x="620.5" y="365.00" font-size="4.9" fill="#000">ALTE REZERVE</text><text x="764.5" y="365.00" font-size="5.0" text-anchor="end" fill="#000">0.00</text><text x="803.5" y="365.00" font-size="5.0" text-anchor="end" fill="#000">1 495.49</text><text x="844.5" y="365.00" font-size="5.0" text-anchor="end" fill="#000">0.00</text><text x="885.5" y="365.00" font-size="5.0" text-anchor="end" fill="#000">1 495.49</text><text x="926.5" y="365.00" font-size="5.0" text-anchor="end" fill="#000">0.00</text><text x="966.5" y="365.00" font-size="5.0" text-anchor="end" fill="#000">0.00</text><text x="1007.5" y="365.00" font-size="5.0" text-anchor="end" fill="#000">0.00</text><text x="1047.5" y="365.00" font-size="5.0" text-anchor="end" fill="#000">1 495.49</text><text x="1086.5" y="365.00" font-size="5.0" text-anchor="end" fill="#000">0.00</text><text x="1123.5" y="365.00" font-size="5.0" text-anchor="end" fill="#000">1 495.49</text><text x="581.7" y="374.60" font-size="4.9" fill="#000">1171</text><text x="620.5" y="374.60" font-size="4.9" fill="#000">REZULTATUL REPORTAT - PROFITUL</text><text x="620.5" y="379.10" font-size="4.9" fill="#000">NEREP./ PIERDERE NEACOP.</text><text x="764.5" y="374.60" font-size="5.0" text-anchor="end" fill="#000">50 840.93</text><text x="803.5" y="374.60" font-size="5.0" text-anchor="end" fill="#000">0.00</text><text x="844.5" y="374.60" font-size="5.0" text-anchor="end" fill="#000">176 837.54</text><text x="885.5" y="374.60" font-size="5.0" text-anchor="end" fill="#000">176 837.54</text><text x="926.5" y="374.60" font-size="5.0" text-anchor="end" fill="#000">0.00</text><text x="966.5" y="374.60" font-size="5.0" text-anchor="end" fill="#000">0.00</text><text x="1007.5" y="374.60" font-size="5.0" text-anchor="end" fill="#000">176 837.54</text><text x="1047.5" y="374.60" font-size="5.0" text-anchor="end" fill="#000">176 837.54</text><text x="1086.5" y="374.60" font-size="5.0" text-anchor="end" fill="#000">0.00</text><text x="1123.5" y="374.60" font-size="5.0" text-anchor="end" fill="#000">0.00</text><text x="581.7" y="390.95" font-size="4.9" fill="#000">121</text><text x="620.5" y="390.95" font-size="4.9" fill="#000">PROFIT SI PIERDERE</text><text x="764.5" y="390.95" font-size="5.0" text-anchor="end" fill="#000">0.00</text><text x="803.5" y="390.95" font-size="5.0" text-anchor="end" fill="#000">176 837.54</text><text x="844.5" y="390.95" font-size="5.0" text-anchor="end" fill="#000">2 584 826.11</text><text x="885.5" y="390.95" font-size="5.0" text-anchor="end" fill="#000">2 614 269.83</text><text x="926.5" y="390.95" font-size="5.0" text-anchor="end" fill="#000">247 233.30</text><text x="966.5" y="390.95" font-size="5.0" text-anchor="end" fill="#000">240 422.55</text><text x="1007.5" y="390.95" font-size="5.0" text-anchor="end" fill="#000">2 802 059.41</text><text x="1047.5" y="390.95" font-size="5.0" text-anchor="end" fill="#000">2 854 692.38</text><text x="1086.5" y="390.95" font-size="5.0" text-anchor="end" fill="#000">0.00</text><text x="1123.5" y="390.95" font-size="5.0" text-anchor="end" fill="#000">52 632.97</text><text x="581.7" y="401.00" font-size="4.9" fill="#000">129</text><text x="620.5" y="401.00" font-size="4.9" fill="#000">REPARTIZAREA PROFITULUI</text><text x="764.5" y="401.00" font-size="5.0" text-anchor="end" fill="#000">0.00</text><text x="803.5" y="401.00" font-size="5.0" text-anchor="end" fill="#000">0.00</text><text x="844.5" y="401.00" font-size="5.0" text-anchor="end" fill="#000">176 837.54</text><text x="885.5" y="401.00" font-size="5.0" text-anchor="end" fill="#000">176 837.54</text><text x="926.5" y="401.00" font-size="5.0" text-anchor="end" fill="#000">0.00</text><text x="966.5" y="401.00" font-size="5.0" text-anchor="end" fill="#000">0.00</text><text x="1007.5" y="401.00" font-size="5.0" text-anchor="end" fill="#000">176 837.54</text><text x="1047.5" y="401.00" font-size="5.0" text-anchor="end" fill="#000">176 837.54</text><text x="1086.5" y="401.00" font-size="5.0" text-anchor="end" fill="#000">0.00</text><text x="1123.5" y="401.00" font-size="5.0" text-anchor="end" fill="#000">0.00</text><text x="657.5" y="411.9" font-size="5.6" font-weight="bold" fill="#000" textLength="44.4" lengthAdjust="spacingAndGlyphs">Total sume clasa</text><text x="707.2" y="411.9" font-size="5.6" font-weight="bold" fill="#000">1</text><text x="764.5" y="411.20" font-size="5.0" text-anchor="end" fill="#000">50 840.93</text><text x="803.5" y="411.20" font-size="5.0" text-anchor="end" fill="#000">178 573.03</text><text x="844.5" y="411.20" font-size="5.0" text-anchor="end" fill="#000">2 908 501.19</text><text x="885.5" y="411.20" font-size="5.0" text-anchor="end" fill="#000">2 969 680.40</text><text x="926.5" y="411.20" font-size="5.0" text-anchor="end" fill="#000">247 233.30</text><text x="966.5" y="411.20" font-size="5.0" text-anchor="end" fill="#000">240 422.55</text><text x="1007.5" y="411.20" font-size="5.0" text-anchor="end" fill="#000">3 155 734.49</text><text x="1047.5" y="411.20" font-size="5.0" text-anchor="end" fill="#000">3 210 102.95</text><text x="1086.5" y="411.20" font-size="5.0" text-anchor="end" fill="#000">0.00</text><text x="1123.5" y="411.20" font-size="5.0" text-anchor="end" fill="#000">54 368.46</text><text x="581.7" y="424.00" font-size="4.9" fill="#000">2133</text><text x="620.5" y="424.00" font-size="4.9" fill="#000">MIJLOACE DE TRANSPORT</text><text x="764.5" y="424.00" font-size="5.0" text-anchor="end" fill="#000">97 185.57</text><text x="803.5" y="424.00" font-size="5.0" text-anchor="end" fill="#000">0.00</text><text x="844.5" y="424.00" font-size="5.0" text-anchor="end" fill="#000">97 185.57</text><text x="885.5" y="424.00" font-size="5.0" text-anchor="end" fill="#000">0.00</text><text x="926.5" y="424.00" font-size="5.0" text-anchor="end" fill="#000">0.00</text><text x="966.5" y="424.00" font-size="5.0" text-anchor="end" fill="#000">0.00</text><text x="1007.5" y="424.00" font-size="5.0" text-anchor="end" fill="#000">97 185.57</text><text x="1047.5" y="424.00" font-size="5.0" text-anchor="end" fill="#000">0.00</text><text x="1086.5" y="424.00" font-size="5.0" text-anchor="end" fill="#000">97 185.57</text><text x="1123.5" y="424.00" font-size="5.0" text-anchor="end" fill="#000">0.00</text><text x="581.7" y="433.40" font-size="4.9" fill="#000">214</text><text x="620.5" y="433.40" font-size="4.9" fill="#000">MOBILIER, APARATURA BIROTICA, ALTE</text><text x="620.5" y="438.00" font-size="4.9" fill="#000">ACTIVE CORPORALE</text><text x="764.5" y="433.40" font-size="5.0" text-anchor="end" fill="#000">6 051.68</text><text x="803.5" y="433.40" font-size="5.0" text-anchor="end" fill="#000">0.00</text><text x="844.5" y="433.40" font-size="5.0" text-anchor="end" fill="#000">6 051.68</text><text x="885.5" y="433.40" font-size="5.0" text-anchor="end" fill="#000">0.00</text><text x="926.5" y="433.40" font-size="5.0" text-anchor="end" fill="#000">0.00</text><text x="966.5" y="433.40" font-size="5.0" text-anchor="end" fill="#000">0.00</text><text x="1007.5" y="433.40" font-size="5.0" text-anchor="end" fill="#000">6 051.68</text><text x="1047.5" y="433.40" font-size="5.0" text-anchor="end" fill="#000">0.00</text><text x="1086.5" y="433.40" font-size="5.0" text-anchor="end" fill="#000">6 051.68</text><text x="1123.5" y="433.40" font-size="5.0" text-anchor="end" fill="#000">0.00</text><text x="581.7" y="448.50" font-size="4.9" fill="#000">2813</text><text x="620.5" y="448.50" font-size="4.9" fill="#000">AMORT. INSTALATIILOR, MIJ. DE</text><text x="620.5" y="452.70" font-size="4.9" fill="#000">TRANSPORT</text><text x="764.5" y="448.50" font-size="5.0" text-anchor="end" fill="#000">0.00</text><text x="803.5" y="448.50" font-size="5.0" text-anchor="end" fill="#000">97 185.57</text><text x="844.5" y="448.50" font-size="5.0" text-anchor="end" fill="#000">0.00</text><text x="885.5" y="448.50" font-size="5.0" text-anchor="end" fill="#000">97 185.57</text><text x="926.5" y="448.50" font-size="5.0" text-anchor="end" fill="#000">0.00</text><text x="966.5" y="448.50" font-size="5.0" text-anchor="end" fill="#000">0.00</text><text x="1007.5" y="448.50" font-size="5.0" text-anchor="end" fill="#000">0.00</text><text x="1047.5" y="448.50" font-size="5.0" text-anchor="end" fill="#000">97 185.57</text><text x="1086.5" y="448.50" font-size="5.0" text-anchor="end" fill="#000">0.00</text><text x="1123.5" y="448.50" font-size="5.0" text-anchor="end" fill="#000">97 185.57</text><text x="581.7" y="465.05" font-size="4.9" fill="#000">2814</text><text x="620.5" y="465.05" font-size="4.9" fill="#000">AMORT. ALTOR IMOBILIZARI CORPORALE</text><text x="764.5" y="465.05" font-size="5.0" text-anchor="end" fill="#000">0.00</text><text x="803.5" y="465.05" font-size="5.0" text-anchor="end" fill="#000">6 051.68</text><text x="844.5" y="465.05" font-size="5.0" text-anchor="end" fill="#000">0.00</text><text x="885.5" y="465.05" font-size="5.0" text-anchor="end" fill="#000">6 051.68</text><text x="926.5" y="465.05" font-size="5.0" text-anchor="end" fill="#000">0.00</text><text x="966.5" y="465.05" font-size="5.0" text-anchor="end" fill="#000">0.00</text><text x="1007.5" y="465.05" font-size="5.0" text-anchor="end" fill="#000">0.00</text><text x="1047.5" y="465.05" font-size="5.0" text-anchor="end" fill="#000">6 051.68</text><text x="1086.5" y="465.05" font-size="5.0" text-anchor="end" fill="#000">0.00</text><text x="1123.5" y="465.05" font-size="5.0" text-anchor="end" fill="#000">6 051.68</text><text x="657.5" y="476.9" font-size="5.6" font-weight="bold" fill="#000" textLength="44.4" lengthAdjust="spacingAndGlyphs">Total sume clasa</text><text x="707.2" y="476.9" font-size="5.6" font-weight="bold" fill="#000">2</text><text x="764.5" y="476.20" font-size="5.0" text-anchor="end" fill="#000">103 237.25</text><text x="803.5" y="476.20" font-size="5.0" text-anchor="end" fill="#000">103 237.25</text><text x="844.5" y="476.20" font-size="5.0" text-anchor="end" fill="#000">103 237.25</text><text x="885.5" y="476.20" font-size="5.0" text-anchor="end" fill="#000">103 237.25</text><text x="926.5" y="476.20" font-size="5.0" text-anchor="end" fill="#000">0.00</text><text x="966.5" y="476.20" font-size="5.0" text-anchor="end" fill="#000">0.00</text><text x="1007.5" y="476.20" font-size="5.0" text-anchor="end" fill="#000">103 237.25</text><text x="1047.5" y="476.20" font-size="5.0" text-anchor="end" fill="#000">103 237.25</text><text x="1086.5" y="476.20" font-size="5.0" text-anchor="end" fill="#000">103 237.25</text><text x="1123.5" y="476.20" font-size="5.0" text-anchor="end" fill="#000">103 237.25</text><text x="581.7" y="487.85" font-size="4.9" fill="#000">3024</text><text x="620.5" y="487.85" font-size="4.9" fill="#000">PIESE DE SCHIMB</text><text x="764.5" y="487.85" font-size="5.0" text-anchor="end" fill="#000">0.00</text><text x="803.5" y="487.85" font-size="5.0" text-anchor="end" fill="#000">0.00</text><text x="844.5" y="487.85" font-size="5.0" text-anchor="end" fill="#000">2 326.84</text><text x="885.5" y="487.85" font-size="5.0" text-anchor="end" fill="#000">2 326.84</text><text x="926.5" y="487.85" font-size="5.0" text-anchor="end" fill="#000">0.00</text><text x="966.5" y="487.85" font-size="5.0" text-anchor="end" fill="#000">0.00</text><text x="1007.5" y="487.85" font-size="5.0" text-anchor="end" fill="#000">2 326.84</text><text x="1047.5" y="487.85" font-size="5.0" text-anchor="end" fill="#000">2 326.84</text><text x="1086.5" y="487.85" font-size="5.0" text-anchor="end" fill="#000">0.00</text><text x="1123.5" y="487.85" font-size="5.0" text-anchor="end" fill="#000">0.00</text><text x="581.7" y="497.75" font-size="4.9" fill="#000">3028</text><text x="620.5" y="497.75" font-size="4.9" fill="#000">ALTE MATERIALE CONSUMABILE</text><text x="764.5" y="497.75" font-size="5.0" text-anchor="end" fill="#000">0.00</text><text x="803.5" y="497.75" font-size="5.0" text-anchor="end" fill="#000">0.00</text><text x="844.5" y="497.75" font-size="5.0" text-anchor="end" fill="#000">69.75</text><text x="885.5" y="497.75" font-size="5.0" text-anchor="end" fill="#000">69.75</text><text x="926.5" y="497.75" font-size="5.0" text-anchor="end" fill="#000">0.00</text><text x="966.5" y="497.75" font-size="5.0" text-anchor="end" fill="#000">0.00</text><text x="1007.5" y="497.75" font-size="5.0" text-anchor="end" fill="#000">69.75</text><text x="1047.5" y="497.75" font-size="5.0" text-anchor="end" fill="#000">69.75</text><text x="1086.5" y="497.75" font-size="5.0" text-anchor="end" fill="#000">0.00</text><text x="1123.5" y="497.75" font-size="5.0" text-anchor="end" fill="#000">0.00</text><text x="581.7" y="507.75" font-size="4.9" fill="#000">303</text><text x="620.5" y="507.75" font-size="4.9" fill="#000">MAT. DE NATURA OB. DE INVENTAR</text><text x="764.5" y="507.75" font-size="5.0" text-anchor="end" fill="#000">0.00</text><text x="803.5" y="507.75" font-size="5.0" text-anchor="end" fill="#000">0.00</text><text x="844.5" y="507.75" font-size="5.0" text-anchor="end" fill="#000">1 170.88</text><text x="885.5" y="507.75" font-size="5.0" text-anchor="end" fill="#000">1 170.88</text><text x="926.5" y="507.75" font-size="5.0" text-anchor="end" fill="#000">453.11</text><text x="966.5" y="507.75" font-size="5.0" text-anchor="end" fill="#000">453.11</text><text x="1007.5" y="507.75" font-size="5.0" text-anchor="end" fill="#000">1 623.99</text><text x="1047.5" y="507.75" font-size="5.0" text-anchor="end" fill="#000">1 623.99</text><text x="1086.5" y="507.75" font-size="5.0" text-anchor="end" fill="#000">0.00</text><text x="1123.5" y="507.75" font-size="5.0" text-anchor="end" fill="#000">0.00</text><text x="581.7" y="517.50" font-size="4.9" fill="#000">327</text><text x="620.5" y="517.50" font-size="4.9" fill="#000">MARFURI IN CURS DE APROVIZIONARE</text><text x="764.5" y="517.50" font-size="5.0" text-anchor="end" fill="#000">312.29</text><text x="803.5" y="517.50" font-size="5.0" text-anchor="end" fill="#000">0.00</text><text x="844.5" y="517.50" font-size="5.0" text-anchor="end" fill="#000">2 993.77</text><text x="885.5" y="517.50" font-size="5.0" text-anchor="end" fill="#000">-0.03</text><text x="926.5" y="517.50" font-size="5.0" text-anchor="end" fill="#000">-2 540.05</text><text x="966.5" y="517.50" font-size="5.0" text-anchor="end" fill="#000">-0.62</text><text x="1007.5" y="517.50" font-size="5.0" text-anchor="end" fill="#000">453.72</text><text x="1047.5" y="517.50" font-size="5.0" text-anchor="end" fill="#000">-0.65</text><text x="1086.5" y="517.50" font-size="5.0" text-anchor="end" fill="#000">454.37</text><text x="1123.5" y="517.50" font-size="5.0" text-anchor="end" fill="#000">0.00</text><text x="581.7" y="527.00" font-size="4.9" fill="#000">371</text><text x="620.5" y="527.00" font-size="4.9" fill="#000">MARFURI</text><text x="764.5" y="527.00" font-size="5.0" text-anchor="end" fill="#000">522 523.89</text><text x="803.5" y="527.00" font-size="5.0" text-anchor="end" fill="#000">0.00</text><text x="844.5" y="527.00" font-size="5.0" text-anchor="end" fill="#000">3 271 329.79</text><text x="885.5" y="527.00" font-size="5.0" text-anchor="end" fill="#000">2 700 215.78</text><text x="926.5" y="527.00" font-size="5.0" text-anchor="end" fill="#000">273 782.24</text><text x="966.5" y="527.00" font-size="5.0" text-anchor="end" fill="#000">285 155.13</text><text x="1007.5" y="527.00" font-size="5.0" text-anchor="end" fill="#000">3 545 112.03</text><text x="1047.5" y="527.00" font-size="5.0" text-anchor="end" fill="#000">2 985 370.91</text><text x="1086.5" y="527.00" font-size="5.0" text-anchor="end" fill="#000">559 741.12</text><text x="1123.5" y="527.00" font-size="5.0" text-anchor="end" fill="#000">0.00</text><text x="581.7" y="537.00" font-size="4.9" fill="#000">378</text><text x="620.5" y="537.00" font-size="4.9" fill="#000">DIFERENTE DE PRET LA MARFURI</text><text x="764.5" y="537.00" font-size="5.0" text-anchor="end" fill="#000">0.00</text><text x="803.5" y="537.00" font-size="5.0" text-anchor="end" fill="#000">115 447.85</text><text x="844.5" y="537.00" font-size="5.0" text-anchor="end" fill="#000">485 714.75</text><text x="885.5" y="537.00" font-size="5.0" text-anchor="end" fill="#000">608 690.70</text><text x="926.5" y="537.00" font-size="5.0" text-anchor="end" fill="#000">38 475.85</text><text x="966.5" y="537.00" font-size="5.0" text-anchor="end" fill="#000">37 467.59</text><text x="1007.5" y="537.00" font-size="5.0" text-anchor="end" fill="#000">524 190.60</text><text x="1047.5" y="537.00" font-size="5.0" text-anchor="end" fill="#000">646 158.29</text><text x="1086.5" y="537.00" font-size="5.0" text-anchor="end" fill="#000">0.00</text><text x="1123.5" y="537.00" font-size="5.0" text-anchor="end" fill="#000">121 967.69</text><text x="657.5" y="548.2" font-size="5.6" font-weight="bold" fill="#000" textLength="44.4" lengthAdjust="spacingAndGlyphs">Total sume clasa</text><text x="707.2" y="548.2" font-size="5.6" font-weight="bold" fill="#000">3</text><text x="764.5" y="547.50" font-size="5.0" text-anchor="end" fill="#000">522 836.18</text><text x="803.5" y="547.50" font-size="5.0" text-anchor="end" fill="#000">115 447.85</text><text x="844.5" y="547.50" font-size="5.0" text-anchor="end" fill="#000">3 763 605.78</text><text x="885.5" y="547.50" font-size="5.0" text-anchor="end" fill="#000">3 312 473.92</text><text x="926.5" y="547.50" font-size="5.0" text-anchor="end" fill="#000">310 171.15</text><text x="966.5" y="547.50" font-size="5.0" text-anchor="end" fill="#000">323 075.21</text><text x="1007.5" y="547.50" font-size="5.0" text-anchor="end" fill="#000">4 073 776.93</text><text x="1047.5" y="547.50" font-size="5.0" text-anchor="end" fill="#000">3 635 549.13</text><text x="1086.5" y="547.50" font-size="5.0" text-anchor="end" fill="#000">560 195.49</text><text x="1123.5" y="547.50" font-size="5.0" text-anchor="end" fill="#000">121 967.69</text><text x="581.7" y="559.75" font-size="4.9" fill="#000">401</text><text x="620.5" y="559.75" font-size="4.9" fill="#000">FURNIZORI</text><text x="764.5" y="559.75" font-size="5.0" text-anchor="end" fill="#000">0.00</text><text x="803.5" y="559.75" font-size="5.0" text-anchor="end" fill="#000">380 995.55</text><text x="844.5" y="559.75" font-size="5.0" text-anchor="end" fill="#000">2 103 366.77</text><text x="885.5" y="559.75" font-size="5.0" text-anchor="end" fill="#000">2 777 894.28</text><text x="926.5" y="559.75" font-size="5.0" text-anchor="end" fill="#000">173 294.84</text><text x="966.5" y="559.75" font-size="5.0" text-anchor="end" fill="#000">240 135.31</text><text x="1007.5" y="559.75" font-size="5.0" text-anchor="end" fill="#000">2 276 660.41</text><text x="1047.5" y="559.75" font-size="5.0" text-anchor="end" fill="#000">3 018 029.59</text><text x="1086.5" y="559.75" font-size="5.0" text-anchor="end" fill="#000">0.00</text><text x="1123.5" y="559.75" font-size="5.0" text-anchor="end" fill="#000">741 366.18</text><text x="581.7" y="569.90" font-size="4.9" fill="#000">408</text><text x="620.5" y="569.90" font-size="4.9" fill="#000">FURNIZORI - FACTURI NESOSITE</text><text x="764.5" y="569.90" font-size="5.0" text-anchor="end" fill="#000">0.00</text><text x="803.5" y="569.90" font-size="5.0" text-anchor="end" fill="#000">0.00</text><text x="844.5" y="569.90" font-size="5.0" text-anchor="end" fill="#000">8.16</text><text x="885.5" y="569.90" font-size="5.0" text-anchor="end" fill="#000">8.28</text><text x="926.5" y="569.90" font-size="5.0" text-anchor="end" fill="#000">0.06</text><text x="966.5" y="569.90" font-size="5.0" text-anchor="end" fill="#000">0.06</text><text x="1007.5" y="569.90" font-size="5.0" text-anchor="end" fill="#000">8.22</text><text x="1047.5" y="569.90" font-size="5.0" text-anchor="end" fill="#000">8.34</text><text x="1086.5" y="569.90" font-size="5.0" text-anchor="end" fill="#000">0.00</text><text x="1123.5" y="569.90" font-size="5.0" text-anchor="end" fill="#000">0.12</text><text x="581.7" y="579.50" font-size="4.9" fill="#000">4091</text><text x="620.5" y="579.50" font-size="4.9" fill="#000">FURNIZORI — DEBITORI PT. CUMPARARI DE</text><text x="620.5" y="584.80" font-size="4.9" fill="#000">BUNURI (STOCURI)</text><text x="764.5" y="579.50" font-size="5.0" text-anchor="end" fill="#000">0.00</text><text x="803.5" y="579.50" font-size="5.0" text-anchor="end" fill="#000">0.00</text><text x="844.5" y="579.50" font-size="5.0" text-anchor="end" fill="#000">575.28</text><text x="885.5" y="579.50" font-size="5.0" text-anchor="end" fill="#000">575.28</text><text x="926.5" y="579.50" font-size="5.0" text-anchor="end" fill="#000">0.00</text><text x="966.5" y="579.50" font-size="5.0" text-anchor="end" fill="#000">0.00</text><text x="1007.5" y="579.50" font-size="5.0" text-anchor="end" fill="#000">575.28</text><text x="1047.5" y="579.50" font-size="5.0" text-anchor="end" fill="#000">575.28</text><text x="1086.5" y="579.50" font-size="5.0" text-anchor="end" fill="#000">0.00</text><text x="1123.5" y="579.50" font-size="5.0" text-anchor="end" fill="#000">0.00</text><text x="581.7" y="595.80" font-size="4.9" fill="#000">4111</text><text x="620.5" y="595.80" font-size="4.9" fill="#000">CLIENTI</text><text x="764.5" y="595.80" font-size="5.0" text-anchor="end" fill="#000">75 960.43</text><text x="803.5" y="595.80" font-size="5.0" text-anchor="end" fill="#000">0.00</text><text x="844.5" y="595.80" font-size="5.0" text-anchor="end" fill="#000">2 298 516.35</text><text x="885.5" y="595.80" font-size="5.0" text-anchor="end" fill="#000">2 150 585.95</text><text x="926.5" y="595.80" font-size="5.0" text-anchor="end" fill="#000">298 720.18</text><text x="966.5" y="595.80" font-size="5.0" text-anchor="end" fill="#000">177 934.45</text><text x="1007.5" y="595.80" font-size="5.0" text-anchor="end" fill="#000">2 597 236.53</text><text x="1047.5" y="595.80" font-size="5.0" text-anchor="end" fill="#000">2 328 520.40</text><text x="1086.5" y="595.80" font-size="5.0" text-anchor="end" fill="#000">268 716.13</text><text x="1123.5" y="595.80" font-size="5.0" text-anchor="end" fill="#000">0.00</text><text x="581.7" y="605.80" font-size="4.9" fill="#000">418</text><text x="620.5" y="605.80" font-size="4.9" fill="#000">CLIENTI - FACTURI DE INTOCMIT</text><text x="764.5" y="605.80" font-size="5.0" text-anchor="end" fill="#000">26 374.53</text><text x="803.5" y="605.80" font-size="5.0" text-anchor="end" fill="#000">0.00</text><text x="844.5" y="605.80" font-size="5.0" text-anchor="end" fill="#000">140 622.75</text><text x="885.5" y="605.80" font-size="5.0" text-anchor="end" fill="#000">0.00</text><text x="926.5" y="605.80" font-size="5.0" text-anchor="end" fill="#000">-31 050.78</text><text x="966.5" y="605.80" font-size="5.0" text-anchor="end" fill="#000">0.00</text><text x="1007.5" y="605.80" font-size="5.0" text-anchor="end" fill="#000">109 571.97</text><text x="1047.5" y="605.80" font-size="5.0" text-anchor="end" fill="#000">0.00</text><text x="1086.5" y="605.80" font-size="5.0" text-anchor="end" fill="#000">109 571.97</text><text x="1123.5" y="605.80" font-size="5.0" text-anchor="end" fill="#000">0.00</text><text x="581.7" y="615.80" font-size="4.9" fill="#000">421</text><text x="620.5" y="615.80" font-size="4.9" fill="#000">PERSONAL - SALARII DATORATE</text><text x="764.5" y="615.80" font-size="5.0" text-anchor="end" fill="#000">0.00</text><text x="803.5" y="615.80" font-size="5.0" text-anchor="end" fill="#000">8 526.00</text><text x="844.5" y="615.80" font-size="5.0" text-anchor="end" fill="#000">204 975.00</text><text x="885.5" y="615.80" font-size="5.0" text-anchor="end" fill="#000">218 529.00</text><text x="926.5" y="615.80" font-size="5.0" text-anchor="end" fill="#000">22 664.00</text><text x="966.5" y="615.80" font-size="5.0" text-anchor="end" fill="#000">22 610.00</text><text x="1007.5" y="615.80" font-size="5.0" text-anchor="end" fill="#000">227 639.00</text><text x="1047.5" y="615.80" font-size="5.0" text-anchor="end" fill="#000">241 139.00</text><text x="1086.5" y="615.80" font-size="5.0" text-anchor="end" fill="#000">0.00</text><text x="1123.5" y="615.80" font-size="5.0" text-anchor="end" fill="#000">13 500.00</text><text x="581.7" y="625.75" font-size="4.9" fill="#000">4315</text><text x="620.5" y="625.75" font-size="4.9" fill="#000">CONTR. DE ASIGURARI SOCIALE</text><text x="764.5" y="625.75" font-size="5.0" text-anchor="end" fill="#000">0.00</text><text x="803.5" y="625.75" font-size="5.0" text-anchor="end" fill="#000">3 613.00</text><text x="844.5" y="625.75" font-size="5.0" text-anchor="end" fill="#000">50 331.00</text><text x="885.5" y="625.75" font-size="5.0" text-anchor="end" fill="#000">55 932.00</text><text x="926.5" y="625.75" font-size="5.0" text-anchor="end" fill="#000">5 601.00</text><text x="966.5" y="625.75" font-size="5.0" text-anchor="end" fill="#000">5 579.00</text><text x="1007.5" y="625.75" font-size="5.0" text-anchor="end" fill="#000">55 932.00</text><text x="1047.5" y="625.75" font-size="5.0" text-anchor="end" fill="#000">61 511.00</text><text x="1086.5" y="625.75" font-size="5.0" text-anchor="end" fill="#000">0.00</text><text x="1123.5" y="625.75" font-size="5.0" text-anchor="end" fill="#000">5 579.00</text><text x="581.7" y="635.40" font-size="4.9" fill="#000">4316</text><text x="620.5" y="635.40" font-size="4.9" fill="#000">CONTR. DE ASIGURARI SOCIALE DE</text><text x="620.5" y="640.30" font-size="4.9" fill="#000">SANATATE</text><text x="764.5" y="635.40" font-size="5.0" text-anchor="end" fill="#000">0.00</text><text x="803.5" y="635.40" font-size="5.0" text-anchor="end" fill="#000">1 445.00</text><text x="844.5" y="635.40" font-size="5.0" text-anchor="end" fill="#000">20 130.00</text><text x="885.5" y="635.40" font-size="5.0" text-anchor="end" fill="#000">22 370.00</text><text x="926.5" y="635.40" font-size="5.0" text-anchor="end" fill="#000">2 240.00</text><text x="966.5" y="635.40" font-size="5.0" text-anchor="end" fill="#000">2 231.00</text><text x="1007.5" y="635.40" font-size="5.0" text-anchor="end" fill="#000">22 370.00</text><text x="1047.5" y="635.40" font-size="5.0" text-anchor="end" fill="#000">24 601.00</text><text x="1086.5" y="635.40" font-size="5.0" text-anchor="end" fill="#000">0.00</text><text x="1123.5" y="635.40" font-size="5.0" text-anchor="end" fill="#000">2 231.00</text><text x="581.7" y="650.90" font-size="4.9" fill="#000">436</text><text x="620.5" y="650.90" font-size="4.9" fill="#000">CONTR. ASIGURATORIE DE MUNCA</text><text x="764.5" y="650.90" font-size="5.0" text-anchor="end" fill="#000">0.00</text><text x="803.5" y="650.90" font-size="5.0" text-anchor="end" fill="#000">325.00</text><text x="844.5" y="650.90" font-size="5.0" text-anchor="end" fill="#000">4 530.00</text><text x="885.5" y="650.90" font-size="5.0" text-anchor="end" fill="#000">5 034.00</text><text x="926.5" y="650.90" font-size="5.0" text-anchor="end" fill="#000">504.00</text><text x="966.5" y="650.90" font-size="5.0" text-anchor="end" fill="#000">502.00</text><text x="1007.5" y="650.90" font-size="5.0" text-anchor="end" fill="#000">5 034.00</text><text x="1047.5" y="650.90" font-size="5.0" text-anchor="end" fill="#000">5 536.00</text><text x="1086.5" y="650.90" font-size="5.0" text-anchor="end" fill="#000">0.00</text><text x="1123.5" y="650.90" font-size="5.0" text-anchor="end" fill="#000">502.00</text></g></g></svg>
</body></html>
